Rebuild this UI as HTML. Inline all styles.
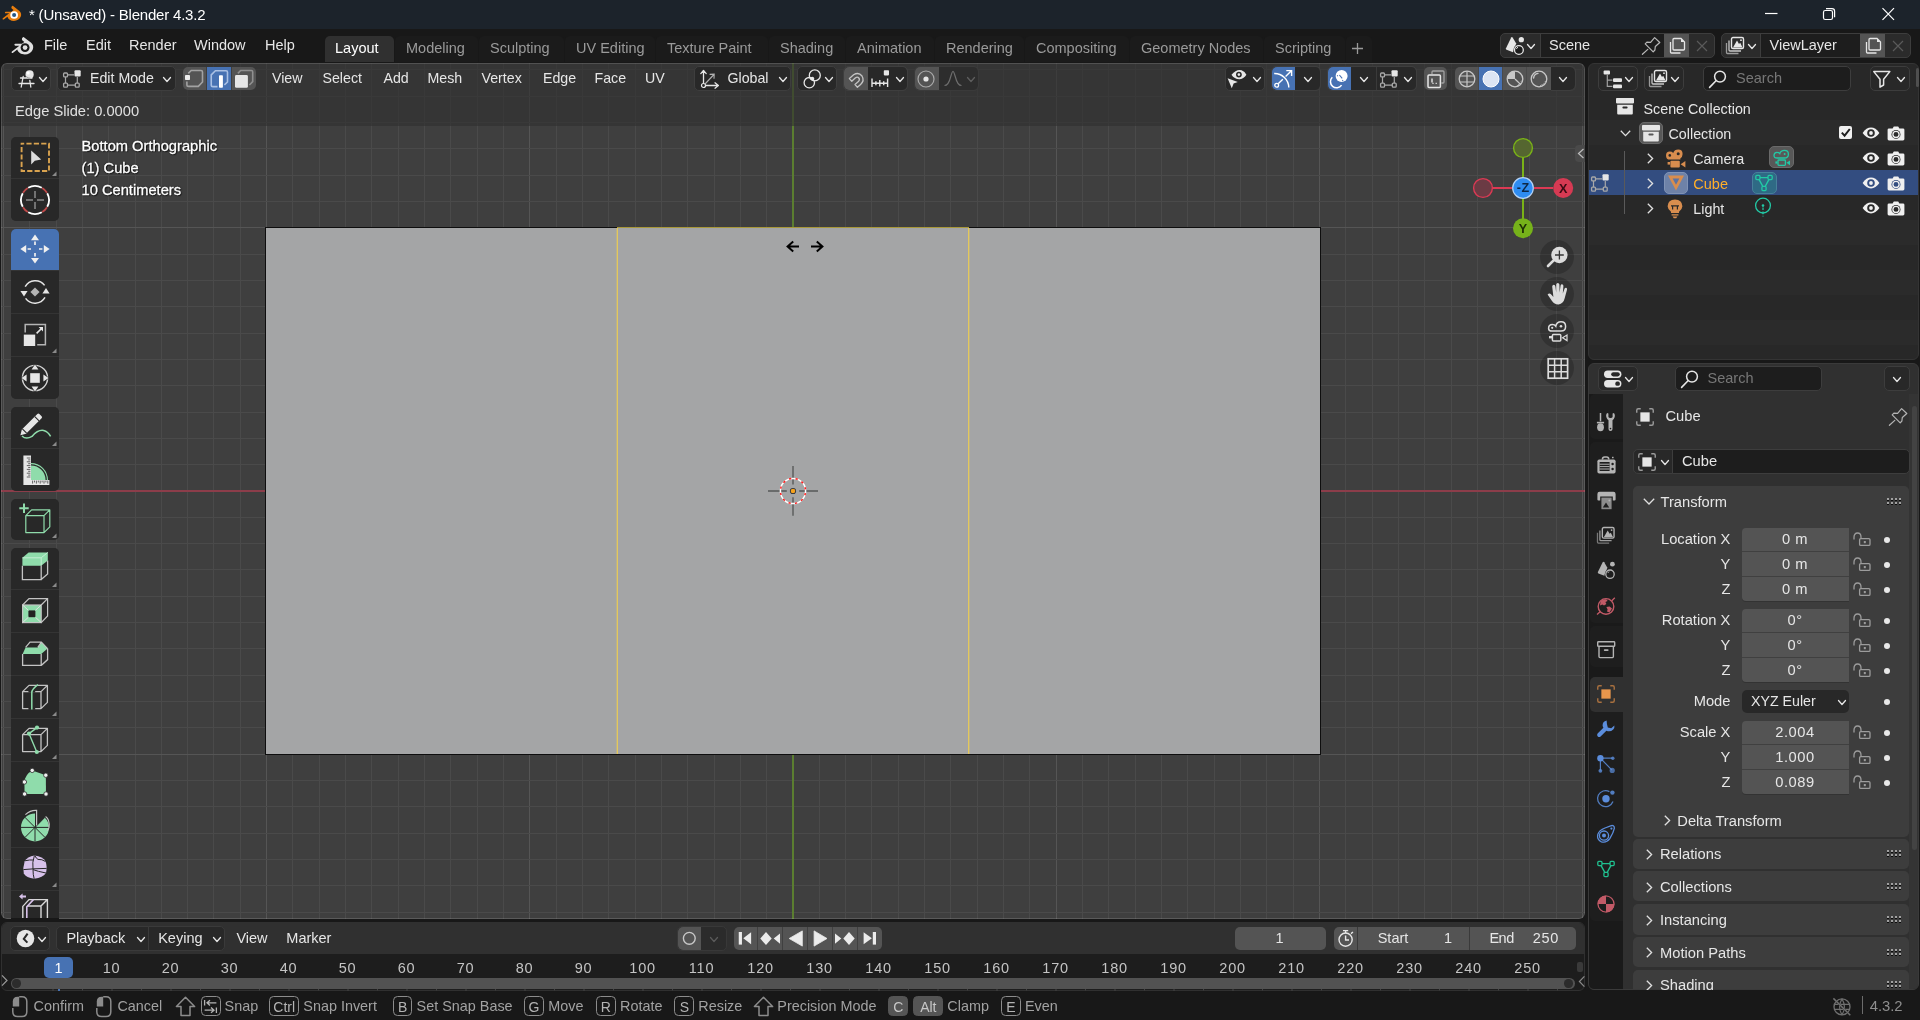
<!DOCTYPE html>
<html><head><meta charset="utf-8"><title>Blender</title>
<style>
html,body{margin:0;padding:0;background:#181818;overflow:hidden;}
body{width:1920px;height:1020px;position:relative;font-family:"Liberation Sans",sans-serif;}
.b{position:absolute;box-sizing:border-box;}
.t{position:absolute;white-space:nowrap;font-family:"Liberation Sans",sans-serif;}
svg{overflow:visible}
</style></head><body><div id="root" style="position:absolute;left:0;top:0;width:1920px;height:1020px;will-change:transform;">
<div class="b" style="left:0px;top:0px;width:1920px;height:29px;background:#1c232b;"></div>
<div class="b" style="left:0px;top:29px;width:1920px;height:991px;background:#181818;"></div>
<div class="b" style="left:1px;top:63px;width:1584px;height:856px;background:#3f3f3f;border-radius:6px;overflow:hidden;" id="vp">
<svg class="b" style="left:0;top:0" width="1584" height="856" shape-rendering="crispEdges"><rect x="2" y="0" width="1" height="856" fill="#555555"/><rect x="28" y="0" width="1" height="856" fill="#4a4a4a"/><rect x="55" y="0" width="1" height="856" fill="#4a4a4a"/><rect x="81" y="0" width="1" height="856" fill="#4a4a4a"/><rect x="107" y="0" width="1" height="856" fill="#4a4a4a"/><rect x="134" y="0" width="1" height="856" fill="#4a4a4a"/><rect x="160" y="0" width="1" height="856" fill="#4a4a4a"/><rect x="186" y="0" width="1" height="856" fill="#4a4a4a"/><rect x="212" y="0" width="1" height="856" fill="#4a4a4a"/><rect x="239" y="0" width="1" height="856" fill="#4a4a4a"/><rect x="265" y="0" width="1" height="856" fill="#555555"/><rect x="291" y="0" width="1" height="856" fill="#4a4a4a"/><rect x="318" y="0" width="1" height="856" fill="#4a4a4a"/><rect x="344" y="0" width="1" height="856" fill="#4a4a4a"/><rect x="370" y="0" width="1" height="856" fill="#4a4a4a"/><rect x="397" y="0" width="1" height="856" fill="#4a4a4a"/><rect x="423" y="0" width="1" height="856" fill="#4a4a4a"/><rect x="449" y="0" width="1" height="856" fill="#4a4a4a"/><rect x="476" y="0" width="1" height="856" fill="#4a4a4a"/><rect x="502" y="0" width="1" height="856" fill="#4a4a4a"/><rect x="528" y="0" width="1" height="856" fill="#555555"/><rect x="555" y="0" width="1" height="856" fill="#4a4a4a"/><rect x="581" y="0" width="1" height="856" fill="#4a4a4a"/><rect x="607" y="0" width="1" height="856" fill="#4a4a4a"/><rect x="634" y="0" width="1" height="856" fill="#4a4a4a"/><rect x="660" y="0" width="1" height="856" fill="#4a4a4a"/><rect x="686" y="0" width="1" height="856" fill="#4a4a4a"/><rect x="713" y="0" width="1" height="856" fill="#4a4a4a"/><rect x="739" y="0" width="1" height="856" fill="#4a4a4a"/><rect x="765" y="0" width="1" height="856" fill="#4a4a4a"/><rect x="818" y="0" width="1" height="856" fill="#4a4a4a"/><rect x="844" y="0" width="1" height="856" fill="#4a4a4a"/><rect x="870" y="0" width="1" height="856" fill="#4a4a4a"/><rect x="897" y="0" width="1" height="856" fill="#4a4a4a"/><rect x="923" y="0" width="1" height="856" fill="#4a4a4a"/><rect x="949" y="0" width="1" height="856" fill="#4a4a4a"/><rect x="976" y="0" width="1" height="856" fill="#4a4a4a"/><rect x="1002" y="0" width="1" height="856" fill="#4a4a4a"/><rect x="1028" y="0" width="1" height="856" fill="#4a4a4a"/><rect x="1055" y="0" width="1" height="856" fill="#555555"/><rect x="1081" y="0" width="1" height="856" fill="#4a4a4a"/><rect x="1107" y="0" width="1" height="856" fill="#4a4a4a"/><rect x="1134" y="0" width="1" height="856" fill="#4a4a4a"/><rect x="1160" y="0" width="1" height="856" fill="#4a4a4a"/><rect x="1186" y="0" width="1" height="856" fill="#4a4a4a"/><rect x="1213" y="0" width="1" height="856" fill="#4a4a4a"/><rect x="1239" y="0" width="1" height="856" fill="#4a4a4a"/><rect x="1265" y="0" width="1" height="856" fill="#4a4a4a"/><rect x="1292" y="0" width="1" height="856" fill="#4a4a4a"/><rect x="1318" y="0" width="1" height="856" fill="#555555"/><rect x="1344" y="0" width="1" height="856" fill="#4a4a4a"/><rect x="1371" y="0" width="1" height="856" fill="#4a4a4a"/><rect x="1397" y="0" width="1" height="856" fill="#4a4a4a"/><rect x="1423" y="0" width="1" height="856" fill="#4a4a4a"/><rect x="1450" y="0" width="1" height="856" fill="#4a4a4a"/><rect x="1476" y="0" width="1" height="856" fill="#4a4a4a"/><rect x="1502" y="0" width="1" height="856" fill="#4a4a4a"/><rect x="1528" y="0" width="1" height="856" fill="#4a4a4a"/><rect x="1555" y="0" width="1" height="856" fill="#4a4a4a"/><rect x="1581" y="0" width="1" height="856" fill="#555555"/><rect x="0" y="6" width="1584" height="1" fill="#4a4a4a"/><rect x="0" y="33" width="1584" height="1" fill="#4a4a4a"/><rect x="0" y="59" width="1584" height="1" fill="#4a4a4a"/><rect x="0" y="85" width="1584" height="1" fill="#4a4a4a"/><rect x="0" y="112" width="1584" height="1" fill="#4a4a4a"/><rect x="0" y="138" width="1584" height="1" fill="#4a4a4a"/><rect x="0" y="164" width="1584" height="1" fill="#555555"/><rect x="0" y="191" width="1584" height="1" fill="#4a4a4a"/><rect x="0" y="217" width="1584" height="1" fill="#4a4a4a"/><rect x="0" y="243" width="1584" height="1" fill="#4a4a4a"/><rect x="0" y="270" width="1584" height="1" fill="#4a4a4a"/><rect x="0" y="296" width="1584" height="1" fill="#4a4a4a"/><rect x="0" y="322" width="1584" height="1" fill="#4a4a4a"/><rect x="0" y="349" width="1584" height="1" fill="#4a4a4a"/><rect x="0" y="375" width="1584" height="1" fill="#4a4a4a"/><rect x="0" y="401" width="1584" height="1" fill="#4a4a4a"/><rect x="0" y="454" width="1584" height="1" fill="#4a4a4a"/><rect x="0" y="480" width="1584" height="1" fill="#4a4a4a"/><rect x="0" y="506" width="1584" height="1" fill="#4a4a4a"/><rect x="0" y="533" width="1584" height="1" fill="#4a4a4a"/><rect x="0" y="559" width="1584" height="1" fill="#4a4a4a"/><rect x="0" y="585" width="1584" height="1" fill="#4a4a4a"/><rect x="0" y="612" width="1584" height="1" fill="#4a4a4a"/><rect x="0" y="638" width="1584" height="1" fill="#4a4a4a"/><rect x="0" y="664" width="1584" height="1" fill="#4a4a4a"/><rect x="0" y="691" width="1584" height="1" fill="#555555"/><rect x="0" y="717" width="1584" height="1" fill="#4a4a4a"/><rect x="0" y="743" width="1584" height="1" fill="#4a4a4a"/><rect x="0" y="770" width="1584" height="1" fill="#4a4a4a"/><rect x="0" y="796" width="1584" height="1" fill="#4a4a4a"/><rect x="0" y="822" width="1584" height="1" fill="#4a4a4a"/><rect x="0" y="849" width="1584" height="1" fill="#4a4a4a"/><rect x="0" y="427" width="1584" height="2" fill="#8c3d4a"/><rect x="791" y="0" width="2" height="856" fill="#5b7e30"/><rect x="264" y="164" width="1056" height="528" fill="#0e0e0e"/><rect x="265" y="165" width="1054" height="526" fill="#a4a5a6"/><rect x="616" y="164" width="352" height="1" fill="#a8983a"/><rect x="615" y="165" width="1" height="526" fill="#e4c85c" opacity="0.35"/><rect x="616" y="165" width="1" height="526" fill="#e4c85c"/><rect x="967" y="165" width="1" height="526" fill="#e4c85c"/><rect x="968" y="165" width="1" height="526" fill="#e4c85c" opacity="0.35"/></svg>
<div class="b" style="left:0px;top:0px;width:1584px;height:63px;background:rgba(48,48,48,0.64);"></div>
<div class="b" style="left:0px;top:0px;width:1584px;height:856px;background:transparent;border:1px solid rgba(255,255,255,0.14);border-radius:6px;"></div>
</div>
<svg class="b" style="left:2px;top:5.4px;" width="19.68" height="16.4" viewBox="0 0 24 20"><path d="M13.6 1.2 L21.2 7.2 C23.4 9 24 11.6 22.8 14.4 C21.4 17.6 18.2 19.4 14.6 19.4 C10.6 19.4 7.4 17.2 6.6 14.2 L2.2 17.6 C1.2 18.4 0 17 1 16.2 L8.8 10.2 L4.6 10.2 C3.2 10.2 3.2 8.2 4.6 8.2 L11.6 8.2 L14 6.2 L11.8 4.4 C10.8 3.4 12.2 0.4 13.6 1.2 Z" fill="#e87d0d"/><circle cx="14.8" cy="12.2" r="4.7" fill="#ffffff"/><circle cx="14.8" cy="12.2" r="2.5" fill="#265787"/></svg>
<span class="t " style="left:29px;top:4.5px;height:20px;line-height:20px;font-size:15px;color:#ffffff;letter-spacing:-0.2px">* (Unsaved) - Blender 4.3.2</span>
<svg class="b" style="left:1760px;top:0px;" width="160" height="29" viewBox="0 0 160 29"><path d="M5 13.5 H17.5" stroke="#fff" stroke-width="1.2" fill="none"/><rect x="63.5" y="10.5" width="9" height="9" rx="1.8" fill="none" stroke="#fff" stroke-width="1.2"/><path d="M66 8.6 H72 Q74.6 8.6 74.6 11.2 V17.2" fill="none" stroke="#fff" stroke-width="1.2"/><path d="M122.5 8.2 L134 19.8 M134 8.2 L122.5 19.8" stroke="#fff" stroke-width="1.2" fill="none"/></svg>
<svg class="b" style="left:11px;top:36px;" width="22.799999999999997" height="19.0" viewBox="0 0 24 20"><path d="M13.6 1.2 L21.2 7.2 C23.4 9 24 11.6 22.8 14.4 C21.4 17.6 18.2 19.4 14.6 19.4 C10.6 19.4 7.4 17.2 6.6 14.2 L2.2 17.6 C1.2 18.4 0 17 1 16.2 L8.8 10.2 L4.6 10.2 C3.2 10.2 3.2 8.2 4.6 8.2 L11.6 8.2 L14 6.2 L11.8 4.4 C10.8 3.4 12.2 0.4 13.6 1.2 Z" fill="#e0e0e0"/><circle cx="14.8" cy="12.2" r="4.7" fill="#181818"/><circle cx="14.8" cy="12.2" r="2.5" fill="#e0e0e0"/></svg>
<span class="t " style="left:44px;top:34.5px;height:20px;line-height:20px;font-size:14.5px;color:#e6e6e6;">File</span>
<span class="t " style="left:86px;top:34.5px;height:20px;line-height:20px;font-size:14.5px;color:#e6e6e6;">Edit</span>
<span class="t " style="left:129px;top:34.5px;height:20px;line-height:20px;font-size:14.5px;color:#e6e6e6;">Render</span>
<span class="t " style="left:194px;top:34.5px;height:20px;line-height:20px;font-size:14.5px;color:#e6e6e6;">Window</span>
<span class="t " style="left:265px;top:34.5px;height:20px;line-height:20px;font-size:14.5px;color:#e6e6e6;">Help</span>
<div class="b" style="left:325px;top:36px;width:69px;height:26px;background:#303030;border-radius:5px 5px 0 0;"></div>
<div class="b" style="left:395px;top:36px;width:83px;height:26px;background:#1b1b1b;border-radius:5px 5px 0 0;"></div>
<div class="b" style="left:479px;top:36px;width:85px;height:26px;background:#1b1b1b;border-radius:5px 5px 0 0;"></div>
<div class="b" style="left:565px;top:36px;width:90px;height:26px;background:#1b1b1b;border-radius:5px 5px 0 0;"></div>
<div class="b" style="left:656px;top:36px;width:112px;height:26px;background:#1b1b1b;border-radius:5px 5px 0 0;"></div>
<div class="b" style="left:769px;top:36px;width:76px;height:26px;background:#1b1b1b;border-radius:5px 5px 0 0;"></div>
<div class="b" style="left:846px;top:36px;width:88px;height:26px;background:#1b1b1b;border-radius:5px 5px 0 0;"></div>
<div class="b" style="left:935px;top:36px;width:89px;height:26px;background:#1b1b1b;border-radius:5px 5px 0 0;"></div>
<div class="b" style="left:1025px;top:36px;width:104px;height:26px;background:#1b1b1b;border-radius:5px 5px 0 0;"></div>
<div class="b" style="left:1130px;top:36px;width:133px;height:26px;background:#1b1b1b;border-radius:5px 5px 0 0;"></div>
<div class="b" style="left:1264px;top:36px;width:81px;height:26px;background:#1b1b1b;border-radius:5px 5px 0 0;"></div>
<div class="b" style="left:1346px;top:36px;width:26px;height:26px;background:#1b1b1b;border-radius:5px 5px 0 0;"></div>
<span class="t " style="left:335px;top:38.0px;height:20px;line-height:20px;font-size:14.5px;color:#ffffff;">Layout</span>
<span class="t " style="left:406px;top:38.0px;height:20px;line-height:20px;font-size:14.5px;color:#9a9a9a;">Modeling</span>
<span class="t " style="left:490px;top:38.0px;height:20px;line-height:20px;font-size:14.5px;color:#9a9a9a;">Sculpting</span>
<span class="t " style="left:576px;top:38.0px;height:20px;line-height:20px;font-size:14.5px;color:#9a9a9a;">UV Editing</span>
<span class="t " style="left:667px;top:38.0px;height:20px;line-height:20px;font-size:14.5px;color:#9a9a9a;">Texture Paint</span>
<span class="t " style="left:780px;top:38.0px;height:20px;line-height:20px;font-size:14.5px;color:#9a9a9a;">Shading</span>
<span class="t " style="left:857px;top:38.0px;height:20px;line-height:20px;font-size:14.5px;color:#9a9a9a;">Animation</span>
<span class="t " style="left:946px;top:38.0px;height:20px;line-height:20px;font-size:14.5px;color:#9a9a9a;">Rendering</span>
<span class="t " style="left:1036px;top:38.0px;height:20px;line-height:20px;font-size:14.5px;color:#9a9a9a;">Compositing</span>
<span class="t " style="left:1141px;top:38.0px;height:20px;line-height:20px;font-size:14.5px;color:#9a9a9a;">Geometry Nodes</span>
<span class="t " style="left:1275px;top:38.0px;height:20px;line-height:20px;font-size:14.5px;color:#9a9a9a;">Scripting</span>
<svg class="b" style="left:1351px;top:42px;" width="13" height="13" viewBox="0 0 13 13"><path d="M6.5 1 V12 M1 6.5 H12" stroke="#9a9a9a" stroke-width="1.3" fill="none"/></svg>
<div class="b" style="left:1500px;top:33px;width:214.5px;height:25px;background:#2b2b2b;border-radius:5px;border:1px solid #3d3d3d;"></div>
<div class="b" style="left:1539.5px;top:33px;width:124.5px;height:25px;background:#1d1d1d;border:1px solid #3d3d3d;border-right:none"></div>
<div class="b" style="left:1664px;top:34px;width:25px;height:23px;background:#545454;"></div>
<span class="t " style="left:1549.0px;top:34.8px;height:20px;line-height:20px;font-size:14.5px;color:#e6e6e6;">Scene</span>
<svg class="b" style="left:1504.6px;top:36px;" width="22" height="22" viewBox="0 0 22 22"><path d="M6.2 1.4 Q6.9 0.6 7.6 1.6 L11.2 7.6 L8 16.2 L1.6 13.8 Q0.6 13.2 1 12.2 Z" fill="#e6e6e6"/><circle cx="16.3" cy="3.7" r="2.65" fill="#e6e6e6"/><circle cx="13.9" cy="14" r="5.4" fill="#282828"/><circle cx="13.9" cy="14" r="4.4" fill="#1d1d1d" stroke="#e6e6e6" stroke-width="1.3"/><path d="M11.4 12.8 Q11.8 11.6 13 11.4" stroke="#e6e6e6" stroke-width="1" fill="none"/></svg>
<svg class="b" style="left:1527.3px;top:44.2px;" width="8" height="5.5" viewBox="0 0 8 5.5"><path d="M0.5 0.5 L4.0 4.5 L7.5 0.5" fill="none" stroke="#e6e6e6" stroke-width="1.3" stroke-linecap="round" stroke-linejoin="round"/></svg>
<svg class="b" style="left:1667.5px;top:36.5px;" width="18" height="18" viewBox="0 0 18 18"><path d="M6 1.5 H13 L16.5 5 V12 Q16.5 13 15.5 13 H6 Q5 13 5 12 V2.5 Q5 1.5 6 1.5 Z" fill="none" stroke="#e6e6e6" stroke-width="1.3"/><path d="M13 1.5 V5 H16.5 Z" fill="#e6e6e6"/><path d="M2.5 5 V15 Q2.5 16 3.5 16 H12.5" fill="none" stroke="#e6e6e6" stroke-width="1.3"/></svg>
<svg class="b" style="left:1696px;top:40px;" width="12" height="12" viewBox="0 0 12 12"><path d="M1 1 L11 11 M11 1 L1 11" stroke="#5a5a5a" stroke-width="1.2" fill="none"/></svg>
<svg class="b" style="left:1641.4px;top:34.9px;" width="20" height="20" viewBox="0 0 20 20"><path d="M13.6 2.6 L18.8 7.5 L14.3 11.5 L13.9 15.0 L12.2 16.9 L4.2 8.9 L5.9 7.2 L9.6 7.3 Z M6.8 14.4 L1.4 19.3" fill="none" stroke="#b8b8b8" stroke-width="1.2" stroke-linejoin="round" stroke-linecap="round"/></svg>
<div class="b" style="left:1721px;top:33px;width:190px;height:25px;background:#2b2b2b;border-radius:5px;border:1px solid #3d3d3d;"></div>
<div class="b" style="left:1760px;top:33px;width:100px;height:25px;background:#1d1d1d;border:1px solid #3d3d3d;border-right:none"></div>
<div class="b" style="left:1860px;top:34px;width:25px;height:23px;background:#545454;"></div>
<span class="t " style="left:1769.5px;top:34.8px;height:20px;line-height:20px;font-size:14.5px;color:#e6e6e6;">ViewLayer</span>
<svg class="b" style="left:1725px;top:36px;" width="20" height="20" viewBox="0 0 20 20"><rect x="6.5" y="1.5" width="12" height="11" rx="1.5" fill="none" stroke="#e6e6e6" stroke-width="1.4"/><path d="M8 11.5 L12 4.5 L14 8 L15.2 6.8 L17.5 11.5 Z" fill="#e6e6e6"/><circle cx="16" cy="4.2" r="0.9" fill="#e6e6e6"/><path d="M4 4.5 V14 Q4 15 5 15 H16" fill="none" stroke="#e6e6e6" stroke-width="1.3" opacity="0.85"/><path d="M1.5 7 V16.5 Q1.5 17.5 2.5 17.5 H13.5" fill="none" stroke="#e6e6e6" stroke-width="1.3" opacity="0.6"/></svg>
<svg class="b" style="left:1747.8px;top:44.2px;" width="8" height="5.5" viewBox="0 0 8 5.5"><path d="M0.5 0.5 L4.0 4.5 L7.5 0.5" fill="none" stroke="#e6e6e6" stroke-width="1.3" stroke-linecap="round" stroke-linejoin="round"/></svg>
<svg class="b" style="left:1863.5px;top:36.5px;" width="18" height="18" viewBox="0 0 18 18"><path d="M6 1.5 H13 L16.5 5 V12 Q16.5 13 15.5 13 H6 Q5 13 5 12 V2.5 Q5 1.5 6 1.5 Z" fill="none" stroke="#e6e6e6" stroke-width="1.3"/><path d="M13 1.5 V5 H16.5 Z" fill="#e6e6e6"/><path d="M2.5 5 V15 Q2.5 16 3.5 16 H12.5" fill="none" stroke="#e6e6e6" stroke-width="1.3"/></svg>
<svg class="b" style="left:1892px;top:40px;" width="12" height="12" viewBox="0 0 12 12"><path d="M1 1 L11 11 M11 1 L1 11" stroke="#5a5a5a" stroke-width="1.2" fill="none"/></svg>
<div class="b" style="left:11px;top:66px;width:40px;height:25px;background:#282828;border:1px solid #3e3e3e;border-radius:5px;"></div>
<svg class="b" style="left:17px;top:69px;" width="20" height="20" viewBox="0 0 20 20"><path d="M3.5 9 H15 M2 14.5 H17 M6.2 7.5 L4.2 18 M12.8 11.5 L13.8 18" stroke="#e6e6e6" stroke-width="1.3" fill="none" stroke-linecap="round"/><circle cx="12.6" cy="5.4" r="4.1" fill="#e6e6e6"/><circle cx="11.2" cy="4" r="1.5" fill="#fff"/><path d="M9.4 7.2 Q10.4 9.6 13.4 9.2" stroke="#282828" stroke-width="0.8" fill="none" opacity="0.5"/></svg>
<svg class="b" style="left:38.5px;top:77px;" width="8" height="5.5" viewBox="0 0 8 5.5"><path d="M0.5 0.5 L4.0 4.5 L7.5 0.5" fill="none" stroke="#e6e6e6" stroke-width="1.3" stroke-linecap="round" stroke-linejoin="round"/></svg>
<div class="b" style="left:57px;top:66px;width:119px;height:25px;background:#282828;border:1px solid #3e3e3e;border-radius:5px;"></div>
<svg class="b" style="left:62px;top:69px;" width="20" height="20" viewBox="0 0 20 20"><path d="M5.6 5.9 H12 M3.5 8 V14 M5.6 16.1 H13.2 M15.3 8 V14" stroke="#a8a8a8" stroke-width="1.2" fill="none"/><rect x="1.6" y="4" width="3.9" height="3.9" rx="0.9" fill="#282828" stroke="#a8a8a8" stroke-width="1.3"/><rect x="1.6" y="14.2" width="3.9" height="3.9" rx="0.9" fill="#282828" stroke="#a8a8a8" stroke-width="1.3"/><rect x="13.3" y="14.2" width="3.9" height="3.9" rx="0.9" fill="#282828" stroke="#a8a8a8" stroke-width="1.3"/><rect x="12.5" y="1.3" width="6.2" height="6.2" rx="1" fill="#e6e6e6"/></svg>
<span class="t " style="left:90px;top:68.0px;height:20px;line-height:20px;font-size:14.2px;color:#e6e6e6;">Edit Mode</span>
<svg class="b" style="left:162.5px;top:77px;" width="8" height="5.5" viewBox="0 0 8 5.5"><path d="M0.5 0.5 L4.0 4.5 L7.5 0.5" fill="none" stroke="#e6e6e6" stroke-width="1.3" stroke-linecap="round" stroke-linejoin="round"/></svg>
<div class="b" style="left:183px;top:67px;width:73px;height:23px;background:#545454;border-radius:5px;"></div>
<div class="b" style="left:207px;top:67px;width:24px;height:23px;background:#4772b3;border-radius:0;"></div>
<div class="b" style="left:206px;top:67px;width:1px;height:23px;background:#3f3f3f;"></div>
<div class="b" style="left:231px;top:67px;width:1px;height:23px;background:#3f3f3f;"></div>
<svg class="b" style="left:185px;top:69px;" width="22" height="22" viewBox="0 0 22 22"><path d="M3.3 4.4 L6.2 1.5 H16 Q17.5 1.5 17.5 3 V13 L13.3 17.4 H3.6 Q1.9 17.4 1.9 15.7 V12.6" fill="none" stroke="#a2a2a2" stroke-width="1.6"/><rect x="0" y="6.1" width="5" height="5" rx="0.8" fill="#ececec"/></svg>
<svg class="b" style="left:209px;top:69px;" width="22" height="22" viewBox="0 0 22 22"><path d="M8.5 17.6 H4 Q2.25 17.6 2.25 15.9 V5.9 L6.4 1.75 H17 Q18.5 1.75 18.5 3.2 V13 L15.4 15.9" fill="none" stroke="#a9c0e4" stroke-width="1.6"/><rect x="10" y="6.3" width="3.9" height="12.5" rx="0.8" fill="#ffffff"/></svg>
<svg class="b" style="left:233px;top:69px;" width="22" height="22" viewBox="0 0 22 22"><path d="M4.9 4.4 L7.6 1.5 H18.4 Q19.7 1.5 19.7 2.8 V12.6 L16.4 16" fill="none" stroke="#8f8f8f" stroke-width="1.6"/><rect x="2" y="6.1" width="12.9" height="12.7" rx="1.4" fill="#e6e6e6"/></svg>
<span class="t " style="left:272px;top:68.0px;height:20px;line-height:20px;font-size:14.2px;color:#e6e6e6;">View</span>
<span class="t " style="left:322.5px;top:68.0px;height:20px;line-height:20px;font-size:14.2px;color:#e6e6e6;">Select</span>
<span class="t " style="left:383.5px;top:68.0px;height:20px;line-height:20px;font-size:14.2px;color:#e6e6e6;">Add</span>
<span class="t " style="left:427.5px;top:68.0px;height:20px;line-height:20px;font-size:14.2px;color:#e6e6e6;">Mesh</span>
<span class="t " style="left:481.5px;top:68.0px;height:20px;line-height:20px;font-size:14.2px;color:#e6e6e6;">Vertex</span>
<span class="t " style="left:543px;top:68.0px;height:20px;line-height:20px;font-size:14.2px;color:#e6e6e6;">Edge</span>
<span class="t " style="left:594.5px;top:68.0px;height:20px;line-height:20px;font-size:14.2px;color:#e6e6e6;">Face</span>
<span class="t " style="left:645px;top:68.0px;height:20px;line-height:20px;font-size:14.2px;color:#e6e6e6;">UV</span>
<div class="b" style="left:694px;top:66px;width:97px;height:25px;background:#282828;border:1px solid #3e3e3e;border-radius:5px;"></div>
<svg class="b" style="left:699px;top:68px;" width="22" height="22" viewBox="0 0 22 22"><path d="M4.5 17.5 V3 M1.8 5.6 L4.5 2.4 L7.2 5.6 M4.5 17.5 H19 M16 14.8 L19.4 17.5 L16 20.2" fill="none" stroke="#e6e6e6" stroke-width="1.3" stroke-linejoin="round" stroke-linecap="round"/><path d="M6 16 L14.5 7 M10.6 6.4 L15.2 6.2 L15 10.8" fill="none" stroke="#b0b0b0" stroke-width="1.1"/><circle cx="4.5" cy="17.5" r="2" fill="#282828" stroke="#e6e6e6" stroke-width="1.2"/></svg>
<span class="t " style="left:727.5px;top:68.0px;height:20px;line-height:20px;font-size:14.2px;color:#e6e6e6;">Global</span>
<svg class="b" style="left:778.5px;top:77px;" width="8" height="5.5" viewBox="0 0 8 5.5"><path d="M0.5 0.5 L4.0 4.5 L7.5 0.5" fill="none" stroke="#e6e6e6" stroke-width="1.3" stroke-linecap="round" stroke-linejoin="round"/></svg>
<div class="b" style="left:797px;top:66px;width:40px;height:25px;background:#282828;border:1px solid #3e3e3e;border-radius:5px;"></div>
<svg class="b" style="left:803px;top:69px;" width="20" height="20" viewBox="0 0 20 20"><circle cx="11.8" cy="6.4" r="5.5" fill="none" stroke="#e6e6e6" stroke-width="1.3"/><circle cx="6.3" cy="13.7" r="5.2" fill="none" stroke="#e6e6e6" stroke-width="1.3"/><circle cx="9.3" cy="9.6" r="1.9" fill="#e6e6e6"/></svg>
<svg class="b" style="left:825px;top:77px;" width="8" height="5.5" viewBox="0 0 8 5.5"><path d="M0.5 0.5 L4.0 4.5 L7.5 0.5" fill="none" stroke="#e6e6e6" stroke-width="1.3" stroke-linecap="round" stroke-linejoin="round"/></svg>
<div class="b" style="left:844px;top:67px;width:63px;height:23px;background:#282828;border-radius:5px;"></div>
<div class="b" style="left:843px;top:66px;width:65px;height:25px;background:transparent;border:1px solid #3e3e3e;border-radius:5px;"></div>
<div class="b" style="left:844px;top:67px;width:24px;height:23px;background:#545454;border-radius:5px 0 0 5px;"></div>
<svg class="b" style="left:846px;top:69.6px;" width="22" height="22" viewBox="0 0 22 22"><path d="M3.4 8.6 L7.6 4.8 Q12.6 1.6 16 6 Q18.8 10.6 14.6 14.4 L11.4 17.2 L9 14.6 L12.4 11.6 Q14.2 9.6 12.8 8 Q11.4 6.4 9.2 8 L5.8 11.2 Z" fill="none" stroke="#c4c4c4" stroke-width="1.3" stroke-linejoin="round"/></svg>
<svg class="b" style="left:870px;top:67px;" width="24" height="24" viewBox="0 0 24 24"><path d="M2 11.4 V20 M17.6 11.4 V20 M2 16.2 H17.6 M5.9 14.2 V18.2 M9.8 13 V19.4 M13.7 14.2 V18.2" stroke="#e6e6e6" stroke-width="1.4" fill="none"/><rect x="13.8" y="3.2" width="5.2" height="5.2" rx="0.8" fill="#e6e6e6"/></svg>
<svg class="b" style="left:896px;top:77px;" width="8" height="5.5" viewBox="0 0 8 5.5"><path d="M0.5 0.5 L4.0 4.5 L7.5 0.5" fill="none" stroke="#e6e6e6" stroke-width="1.3" stroke-linecap="round" stroke-linejoin="round"/></svg>
<div class="b" style="left:915px;top:67px;width:63px;height:23px;background:#2d2d2d;border-radius:5px;"></div>
<div class="b" style="left:914px;top:66px;width:65px;height:25px;background:transparent;border:1px solid #3a3a3a;border-radius:5px;"></div>
<div class="b" style="left:915px;top:67px;width:24px;height:23px;background:#545454;border-radius:5px 0 0 5px;"></div>
<svg class="b" style="left:915px;top:68px;" width="22" height="22" viewBox="0 0 22 22"><circle cx="11" cy="11" r="8" fill="none" stroke="#a9a9a9" stroke-width="1.2"/><circle cx="11" cy="11" r="2.6" fill="#e6e6e6"/></svg>
<svg class="b" style="left:942px;top:68px;" width="22" height="22" viewBox="0 0 22 22"><path d="M2.5 17.5 Q6.5 17.5 8.6 9 Q10.2 3.4 11 3.4 Q11.8 3.4 13.4 9 Q15.5 17.5 19.5 17.5" fill="none" stroke="#6e6e6e" stroke-width="1.2"/></svg>
<svg class="b" style="left:966.5px;top:77px;" width="8" height="5.5" viewBox="0 0 8 5.5"><path d="M0.5 0.5 L4.0 4.5 L7.5 0.5" fill="none" stroke="#5e5e5e" stroke-width="1.3" stroke-linecap="round" stroke-linejoin="round"/></svg>
<div class="b" style="left:1225px;top:66px;width:40px;height:25px;background:#282828;border:1px solid #3e3e3e;border-radius:5px;"></div>
<svg class="b" style="left:1226.4px;top:68px;" width="24" height="22" viewBox="0 0 24 22"><path d="M5.5 6.8 Q10.4 0.8 15.6 2.2 Q19 3.4 20.4 6.8 Q18 10.6 13.8 11.2 Q8.4 11.4 5.5 6.8 Z" fill="#e6e6e6"/><circle cx="12.9" cy="6.6" r="2.9" fill="#282828"/><circle cx="12.9" cy="6.6" r="1.3" fill="#e6e6e6"/><path d="M1.6 10.3 L11.8 14 L7.6 15.6 L5.8 20.2 Z" fill="#e6e6e6" stroke="#282828" stroke-width="0.8" paint-order="stroke"/></svg>
<svg class="b" style="left:1252.5px;top:77px;" width="8" height="5.5" viewBox="0 0 8 5.5"><path d="M0.5 0.5 L4.0 4.5 L7.5 0.5" fill="none" stroke="#e6e6e6" stroke-width="1.3" stroke-linecap="round" stroke-linejoin="round"/></svg>
<div class="b" style="left:1272px;top:67px;width:48px;height:23px;background:#282828;border-radius:5px;"></div>
<div class="b" style="left:1271px;top:66px;width:50px;height:25px;background:transparent;border:1px solid #3e3e3e;border-radius:5px;"></div>
<div class="b" style="left:1272px;top:67px;width:23px;height:23px;background:#4772b3;border-radius:5px 0 0 5px;"></div>
<svg class="b" style="left:1273px;top:68px;" width="22" height="22" viewBox="0 0 22 22"><path d="M1.2 5.5 A14.3 14.3 0 0 1 15.8 19.6" fill="none" stroke="#fff" stroke-width="1.4"/><path d="M5.2 15.7 L9.8 11.2 M12.6 8.5 L18.4 2.8 M13.3 2.6 H18.6 V7.9" fill="none" stroke="#fff" stroke-width="1.4"/><circle cx="3.7" cy="17.2" r="1.9" fill="#4772b3" stroke="#fff" stroke-width="1.3"/></svg>
<svg class="b" style="left:1303.5px;top:77px;" width="8" height="5.5" viewBox="0 0 8 5.5"><path d="M0.5 0.5 L4.0 4.5 L7.5 0.5" fill="none" stroke="#e6e6e6" stroke-width="1.3" stroke-linecap="round" stroke-linejoin="round"/></svg>
<div class="b" style="left:1328px;top:67px;width:88px;height:23px;background:#282828;border-radius:5px;"></div>
<div class="b" style="left:1327px;top:66px;width:90px;height:25px;background:transparent;border:1px solid #3e3e3e;border-radius:5px;"></div>
<div class="b" style="left:1328px;top:67px;width:23px;height:23px;background:#4772b3;border-radius:5px 0 0 5px;"></div>
<div class="b" style="left:1376px;top:67px;width:1px;height:23px;background:#3a3a3a;"></div>
<svg class="b" style="left:1329px;top:68px;" width="22" height="22" viewBox="0 0 22 22"><path d="M3.3 9.3 A6.1 6.1 0 1 0 12.6 17.1" fill="none" stroke="#fff" stroke-width="1.5"/><circle cx="12.6" cy="7.9" r="6.8" fill="#4772b3"/><circle cx="12.6" cy="7.9" r="6" fill="#fff"/><path d="M10.4 7 L13.2 10.4 M8 7.6 L9 8 M13.4 12 L14 13" stroke="#4772b3" stroke-width="1.1"/></svg>
<svg class="b" style="left:1359.5px;top:77px;" width="8" height="5.5" viewBox="0 0 8 5.5"><path d="M0.5 0.5 L4.0 4.5 L7.5 0.5" fill="none" stroke="#e6e6e6" stroke-width="1.3" stroke-linecap="round" stroke-linejoin="round"/></svg>
<svg class="b" style="left:1379px;top:69px;" width="20" height="20" viewBox="0 0 20 20"><path d="M5.6 5.9 H12 M3.5 8 V14 M5.6 16.1 H13.2 M15.3 8 V14" stroke="#a8a8a8" stroke-width="1.2" fill="none"/><rect x="1.6" y="4" width="3.9" height="3.9" rx="0.9" fill="#282828" stroke="#a8a8a8" stroke-width="1.3"/><rect x="1.6" y="14.2" width="3.9" height="3.9" rx="0.9" fill="#282828" stroke="#a8a8a8" stroke-width="1.3"/><rect x="13.3" y="14.2" width="3.9" height="3.9" rx="0.9" fill="#282828" stroke="#a8a8a8" stroke-width="1.3"/><rect x="12.5" y="1.3" width="6.2" height="6.2" rx="1" fill="#e6e6e6"/></svg>
<svg class="b" style="left:1404px;top:77px;" width="8" height="5.5" viewBox="0 0 8 5.5"><path d="M0.5 0.5 L4.0 4.5 L7.5 0.5" fill="none" stroke="#e6e6e6" stroke-width="1.3" stroke-linecap="round" stroke-linejoin="round"/></svg>
<div class="b" style="left:1424px;top:67px;width:23px;height:23px;background:#545454;border-radius:5px;"></div>
<svg class="b" style="left:1425px;top:68px;" width="22" height="22" viewBox="0 0 22 22"><path d="M7 6 V4 Q7 3 8 3 H18 Q19 3 19 4 V14 Q19 15 18 15 H16.4" fill="none" stroke="#a2a2a2" stroke-width="1.3"/><rect x="3" y="7" width="12.4" height="12.4" rx="1" fill="none" stroke="#e6e6e6" stroke-width="1.5"/><path d="M7 10.4 V14.6 M7.4 15.4 H8.6 M10.6 15.4 H11.8" stroke="#e6e6e6" stroke-width="1.4"/></svg>
<div class="b" style="left:1455px;top:67px;width:120px;height:23px;background:#545454;border-radius:5px;"></div>
<div class="b" style="left:1551px;top:67px;width:24px;height:23px;background:#282828;border-radius:0 5px 5px 0;"></div>
<div class="b" style="left:1551px;top:66px;width:25px;height:25px;background:transparent;border:1px solid #3e3e3e;border-left:none;border-radius:0 5px 5px 0;"></div>
<div class="b" style="left:1479px;top:67px;width:23px;height:23px;background:#4772b3;border-radius:0;"></div>
<div class="b" style="left:1478px;top:67px;width:1px;height:23px;background:#4a4a4a;"></div>
<div class="b" style="left:1502px;top:67px;width:1px;height:23px;background:#4a4a4a;"></div>
<div class="b" style="left:1526px;top:67px;width:1px;height:23px;background:#4a4a4a;"></div>
<svg class="b" style="left:1456px;top:68px;" width="22" height="22" viewBox="0 0 22 22"><circle cx="11" cy="11" r="7.8" fill="none" stroke="#c8c8c8" stroke-width="1.3"/><path d="M11 3.2 V18.8 M3.6 8 H18.4 M3.6 14 H18.4" stroke="#c8c8c8" stroke-width="1.2" fill="none"/></svg>
<svg class="b" style="left:1480px;top:68px;" width="22" height="22" viewBox="0 0 22 22"><circle cx="11" cy="11" r="8" fill="#dde5f3" stroke="#fff" stroke-width="1"/></svg>
<svg class="b" style="left:1504px;top:68px;" width="22" height="22" viewBox="0 0 22 22"><circle cx="11" cy="11" r="7.8" fill="none" stroke="#c8c8c8" stroke-width="1.3"/><path d="M11 3.2 A7.8 7.8 0 0 0 3.2 11 H11 Z" fill="#c8c8c8"/><path d="M11 11 L16.6 16.4" stroke="#c8c8c8" stroke-width="1.3"/><path d="M13.4 17.6 L14.6 16.4 M15.6 16 L16.8 14.8 M17 13.6 L18 12.6" stroke="#c8c8c8" stroke-width="1"/></svg>
<svg class="b" style="left:1528px;top:68px;" width="22" height="22" viewBox="0 0 22 22"><circle cx="11" cy="11" r="7.8" fill="none" stroke="#c8c8c8" stroke-width="1.3"/><path d="M5.6 10 Q6 6 10 5.4" fill="none" stroke="#c8c8c8" stroke-width="1.4" stroke-linecap="round"/><path d="M12.4 17.8 L13.6 16.6 M14.8 16.6 L16 15.4 M16.6 14.2 L17.6 13.2" stroke="#c8c8c8" stroke-width="1"/></svg>
<svg class="b" style="left:1559px;top:77px;" width="8" height="5.5" viewBox="0 0 8 5.5"><path d="M0.5 0.5 L4.0 4.5 L7.5 0.5" fill="none" stroke="#e6e6e6" stroke-width="1.3" stroke-linecap="round" stroke-linejoin="round"/></svg>
<span class="t " style="left:15px;top:100.5px;height:20px;line-height:20px;font-size:14.7px;color:#e0e0e0;">Edge Slide: 0.0000</span>
<div class="b" style="left:11px;top:137px;width:48px;height:84px;background:#343434;border-radius:5px;overflow:hidden;">
<div class="b" style="left:0px;top:0px;width:48px;height:41px;background:#282828;"></div>
<div class="b" style="left:0px;top:42px;width:48px;height:42px;background:#282828;"></div>
</div>
<div class="b" style="left:11px;top:229px;width:48px;height:170px;background:#343434;border-radius:5px;overflow:hidden;">
<div class="b" style="left:0px;top:0px;width:48px;height:41px;background:#4772b3;"></div>
<div class="b" style="left:0px;top:42px;width:48px;height:42px;background:#282828;"></div>
<div class="b" style="left:0px;top:85px;width:48px;height:42px;background:#282828;"></div>
<div class="b" style="left:0px;top:128px;width:48px;height:42px;background:#282828;"></div>
</div>
<div class="b" style="left:11px;top:407px;width:48px;height:84px;background:#343434;border-radius:5px;overflow:hidden;">
<div class="b" style="left:0px;top:0px;width:48px;height:41px;background:#282828;"></div>
<div class="b" style="left:0px;top:42px;width:48px;height:42px;background:#282828;"></div>
</div>
<div class="b" style="left:11px;top:499px;width:48px;height:41px;background:#343434;border-radius:5px;overflow:hidden;">
<div class="b" style="left:0px;top:0px;width:48px;height:41px;background:#282828;"></div>
</div>
<div class="b" style="left:11px;top:548px;width:48px;height:370px;background:#343434;border-radius:5px 5px 0 0;overflow:hidden;">
<div class="b" style="left:0px;top:0px;width:48px;height:41px;background:#282828;"></div>
<div class="b" style="left:0px;top:42px;width:48px;height:42px;background:#282828;"></div>
<div class="b" style="left:0px;top:85px;width:48px;height:42px;background:#282828;"></div>
<div class="b" style="left:0px;top:128px;width:48px;height:42px;background:#282828;"></div>
<div class="b" style="left:0px;top:171px;width:48px;height:42px;background:#282828;"></div>
<div class="b" style="left:0px;top:214px;width:48px;height:42px;background:#282828;"></div>
<div class="b" style="left:0px;top:257px;width:48px;height:42px;background:#282828;"></div>
<div class="b" style="left:0px;top:300px;width:48px;height:42px;background:#282828;"></div>
<div class="b" style="left:0px;top:343px;width:48px;height:27px;background:#282828;"></div>
</div>
<svg class="b" style="left:11px;top:137px;" width="48" height="42" viewBox="0 0 48 42"><rect x="10.6" y="6.6" width="27.4" height="27.4" fill="none" stroke="#d9a34f" stroke-width="1.9" stroke-dasharray="5.2 2.2" stroke-dashoffset="2.6"/><path d="M20.2 13.4 V27.4 L23.8 23.8 L30.2 22.6 Z" fill="#dcdcdc"/><path d="M45.5 39 L45.5 34.5 L41.0 39 Z" fill="#8a8a8a"/></svg>
<svg class="b" style="left:11px;top:179px;" width="48" height="42" viewBox="0 0 48 42"><path d="M36.24 14.21 A14 14 0 0 1 36.24 27.79" fill="none" stroke="#ffffff" stroke-width="1.8"/><path d="M36.00 28.21 A14 14 0 0 1 31.21 33.00" fill="none" stroke="#c04a4a" stroke-width="1.8"/><path d="M30.79 33.24 A14 14 0 0 1 17.21 33.24" fill="none" stroke="#ffffff" stroke-width="1.8"/><path d="M16.79 33.00 A14 14 0 0 1 12.00 28.21" fill="none" stroke="#c04a4a" stroke-width="1.8"/><path d="M11.76 27.79 A14 14 0 0 1 11.76 14.21" fill="none" stroke="#ffffff" stroke-width="1.8"/><path d="M12.00 13.79 A14 14 0 0 1 16.79 9.00" fill="none" stroke="#c04a4a" stroke-width="1.8"/><path d="M17.21 8.76 A14 14 0 0 1 30.79 8.76" fill="none" stroke="#ffffff" stroke-width="1.8"/><path d="M31.21 9.00 A14 14 0 0 1 36.00 13.79" fill="none" stroke="#c04a4a" stroke-width="1.8"/><path d="M15 21 H22 M26 21 H33 M24 12 V19 M24 23 V30" stroke="#8a8a8a" stroke-width="1.5" fill="none"/></svg>
<svg class="b" style="left:11px;top:229px;" width="48" height="42" viewBox="0 0 48 42"><path d="M24 5.6 L28 11.2 H20 Z M24 34.6 L28 29 H20 Z M9.4 20 L15.2 16 V24 Z M38.6 20 L32.8 16 V24 Z" fill="#f0f0f0"/><path d="M24 12.6 V16 M24 24 V27.4 M16.6 20 H20 M28 20 H31.4" stroke="#f0f0f0" stroke-width="1.7" fill="none"/></svg>
<svg class="b" style="left:11px;top:271px;" width="48" height="42" viewBox="0 0 48 42"><path d="M14.2 15.6 A11.6 11.6 0 0 1 33.6 14.4" fill="none" stroke="#e6e6e6" stroke-width="1.5"/><path d="M34 26.4 A11.6 11.6 0 0 1 14.6 27.4" fill="none" stroke="#e6e6e6" stroke-width="1.5"/><path d="M9.4 20 H16.6 L13 25.4 Z M31.4 22.4 H38.6 L35 17 Z" fill="#e6e6e6"/><path d="M24 16.4 L28.6 21 L24 25.6 L19.4 21 Z" fill="#b4b4b4"/></svg>
<svg class="b" style="left:11px;top:314px;" width="48" height="42" viewBox="0 0 48 42"><path d="M14.2 18.6 V10.6 H34.4 V30.8 H26.2" fill="none" stroke="#b4b4b4" stroke-width="1.5"/><rect x="12.8" y="20.6" width="11.4" height="11.4" fill="#e6e6e6"/><path d="M25.6 19.4 L31 14" stroke="#e6e6e6" stroke-width="1.6"/><path d="M27.6 13 H32 V17.4 Z" fill="#e6e6e6"/><path d="M45.5 39 L45.5 34.5 L41.0 39 Z" fill="#8a8a8a"/></svg>
<svg class="b" style="left:11px;top:357px;" width="48" height="42" viewBox="0 0 48 42"><circle cx="24" cy="21" r="12.6" fill="none" stroke="#d4d4d4" stroke-width="1.4"/><path d="M24 7.4 L27.4 12.6 H20.6 Z M24 34.6 L27.4 29.4 H20.6 Z M10.4 21 L15.6 17.6 V24.4 Z M37.6 21 L32.4 17.6 V24.4 Z" fill="#e6e6e6" stroke="#282828" stroke-width="1.2" paint-order="stroke"/><rect x="19.2" y="16.2" width="9.6" height="9.6" fill="#e6e6e6"/></svg>
<svg class="b" style="left:11px;top:407px;" width="48" height="42" viewBox="0 0 48 42"><path d="M11 29 Q15 33 21 29.4 Q27 22.4 32.6 23.4 Q37 24.4 39.6 29.4" fill="none" stroke="#8fdcab" stroke-width="1.5"/><g transform="translate(9.4 28.2) rotate(-45)"><path d="M0 0 L5 -3 H27 Q28.4 -3 28.4 -1.6 V1.6 Q28.4 3 27 3 H5 Z" fill="#e6e6e6"/><path d="M5.8 -3 V3 M23.4 -3 V3" stroke="#282828" stroke-width="1.1"/></g><path d="M45.5 39 L45.5 34.5 L41.0 39 Z" fill="#8a8a8a"/></svg>
<svg class="b" style="left:11px;top:449px;" width="48" height="42" viewBox="0 0 48 42"><path d="M20 16.4 A14.6 14.6 0 0 1 34.6 31 H20 Z" fill="#8fdcab"/><path d="M20 14.6 A16.4 16.4 0 0 1 36.4 31" fill="none" stroke="#8fdcab" stroke-width="1.1"/><path d="M12.4 6.6 H20 V31 H38.4 V36 H12.4 Z" fill="#e6e6e6"/><path d="M15.8 9.0 H19.4" stroke="#282828" stroke-width="0.7"/><path d="M17.2 10.9 H19.4" stroke="#282828" stroke-width="0.7"/><path d="M15.8 12.8 H19.4" stroke="#282828" stroke-width="0.7"/><path d="M17.2 14.7 H19.4" stroke="#282828" stroke-width="0.7"/><path d="M15.8 16.6 H19.4" stroke="#282828" stroke-width="0.7"/><path d="M17.2 18.5 H19.4" stroke="#282828" stroke-width="0.7"/><path d="M15.8 20.4 H19.4" stroke="#282828" stroke-width="0.7"/><path d="M17.2 22.3 H19.4" stroke="#282828" stroke-width="0.7"/><path d="M15.8 24.2 H19.4" stroke="#282828" stroke-width="0.7"/><path d="M17.2 26.1 H19.4" stroke="#282828" stroke-width="0.7"/><path d="M15.8 28.0 H19.4" stroke="#282828" stroke-width="0.7"/><path d="M21.6 34.6 V31.6" stroke="#282828" stroke-width="0.7"/><path d="M23.5 33.4 V31.6" stroke="#282828" stroke-width="0.7"/><path d="M25.4 34.6 V31.6" stroke="#282828" stroke-width="0.7"/><path d="M27.3 33.4 V31.6" stroke="#282828" stroke-width="0.7"/><path d="M29.2 34.6 V31.6" stroke="#282828" stroke-width="0.7"/><path d="M31.1 33.4 V31.6" stroke="#282828" stroke-width="0.7"/><path d="M33.0 34.6 V31.6" stroke="#282828" stroke-width="0.7"/><path d="M34.9 33.4 V31.6" stroke="#282828" stroke-width="0.7"/><path d="M36.8 34.6 V31.6" stroke="#282828" stroke-width="0.7"/></svg>
<svg class="b" style="left:11px;top:499px;" width="48" height="42" viewBox="0 0 48 42"><path d="M13 4.6 V14 M8.3 9.3 H17.7" stroke="#8fdcab" stroke-width="2" fill="none"/><path d="M14.8 16.6 H33 V33.6 H14.8 Z M14.8 16.6 L20.6 10.8 H38.8 L33 16.6 M38.8 10.8 V27.8 L33 33.6" fill="none" stroke="#8fdcab" stroke-width="1.2" stroke-linejoin="round"/><path d="M45.5 39 L45.5 34.5 L41.0 39 Z" fill="#8a8a8a"/></svg>
<svg class="b" style="left:11px;top:548px;" width="48" height="42" viewBox="0 0 48 42"><path d="M11.4 17.8 V31.6 H30.2 V17.8 M30.2 31.6 L36.6 26 V12.4" fill="none" stroke="#c4c4c4" stroke-width="1.3"/><path d="M11.4 9.8 L17.6 4.4 H36.8 V12.4 L30.2 17.8 H11.4 Z" fill="#8fdcab"/><path d="M11.4 9.8 H30.2 L36.8 4.4 M30.2 9.8 V17.8" fill="none" stroke="#c9efd8" stroke-width="0.9"/><path d="M45.5 39 L45.5 34.5 L41.0 39 Z" fill="#8a8a8a"/></svg>
<svg class="b" style="left:11px;top:590px;" width="48" height="42" viewBox="0 0 48 42"><path d="M11.6 15 L18 8.6 H36.6 V26 L30.2 32.6 M30.2 15 L36.6 8.6" fill="none" stroke="#c4c4c4" stroke-width="1.2"/><rect x="11.6" y="15" width="18.6" height="17.6" fill="#8fdcab" stroke="#c4c4c4" stroke-width="1.2"/><rect x="17.4" y="20.4" width="7" height="6.8" fill="#222"/><path d="M11.6 15 L17.4 20.4 M30.2 15 L24.4 20.4 M11.6 32.6 L17.4 27.2 M30.2 32.6 L24.4 27.2" stroke="#e0e0e0" stroke-width="1" fill="none"/></svg>
<svg class="b" style="left:11px;top:633px;" width="48" height="42" viewBox="0 0 48 42"><path d="M11.6 21 V32.4 H30.2 V21 M30.2 32.4 L36.6 26.6 V15.6" fill="none" stroke="#c4c4c4" stroke-width="1.3"/><path d="M11.6 21 L14.6 14.4 H26.8 L30.2 21 Z M26.8 14.4 L30.6 9.6 L36.6 15.6 L30.2 21 Z" fill="#8fdcab"/><path d="M14.6 14.4 L19 9.2 H30.4 L36.6 15.6 M26.8 14.4 L30.4 9.2" fill="none" stroke="#c4c4c4" stroke-width="1.2"/></svg>
<svg class="b" style="left:11px;top:677px;" width="48" height="42" viewBox="0 0 48 42"><path d="M11.6 14.6 H30 V31.6 H11.6 Z M11.6 14.6 L18.0 8.399999999999999 H36.4 L30 14.6 M36.4 8.399999999999999 V25.400000000000002 L30 31.6" fill="none" stroke="#c4c4c4" stroke-width="1.3" stroke-linejoin="round"/><path d="M17.4 14.4 H24.2 M17.4 31.6 H24.2" stroke="#282828" stroke-width="2.2"/><path d="M20.8 32.4 V15.6 Q20.8 12 27 7.6" fill="none" stroke="#8fdcab" stroke-width="1.5"/><path d="M45.5 39 L45.5 34.5 L41.0 39 Z" fill="#8a8a8a"/></svg>
<svg class="b" style="left:11px;top:720px;" width="48" height="42" viewBox="0 0 48 42"><path d="M11.6 14.6 H30 V31.6 H11.6 Z M11.6 14.6 L18.0 8.399999999999999 H36.4 L30 14.6 M36.4 8.399999999999999 V25.400000000000002 L30 31.6" fill="none" stroke="#c4c4c4" stroke-width="1.3" stroke-linejoin="round"/><path d="M26 7.6 L18 13.6 L25.8 32" fill="none" stroke="#8fdcab" stroke-width="1.4"/><circle cx="26" cy="7.6" r="2.1" fill="#8fdcab"/><circle cx="18" cy="13.6" r="2.1" fill="#8fdcab"/><circle cx="25.8" cy="32" r="2.1" fill="#8fdcab"/><path d="M45.5 39 L45.5 34.5 L41.0 39 Z" fill="#8a8a8a"/></svg>
<svg class="b" style="left:11px;top:762.8px;" width="48" height="42" viewBox="0 0 48 42"><path d="M21.2 7.4 L34.8 12.2 L35 31 H13.6 L13.4 19 Q14 11.4 21.2 7.4 Z" fill="#8fdcab"/><circle cx="21.2" cy="7.4" r="2.2" fill="#f0f0f0" stroke="#282828" stroke-width="0.8"/><circle cx="34.8" cy="12.2" r="2.2" fill="#f0f0f0" stroke="#282828" stroke-width="0.8"/><circle cx="35" cy="31" r="2.2" fill="#f0f0f0" stroke="#282828" stroke-width="0.8"/><circle cx="13.6" cy="31" r="2.2" fill="#f0f0f0" stroke="#282828" stroke-width="0.8"/><circle cx="13.4" cy="19" r="2.2" fill="#f0f0f0" stroke="#282828" stroke-width="0.8"/></svg>
<svg class="b" style="left:11px;top:805px;" width="48" height="42" viewBox="0 0 48 42"><path d="M24 22.4 V8.4 A14 14 0 1 0 38 22.4 Z" fill="#8fdcab"/><path d="M24 22.4 L33.6 12.6 A14 14 0 0 1 38 22.4 Z" fill="#8fdcab"/><path d="M24 22.4 L14.1 12.5 M24 22.4 H10 M24 22.4 L14.1 32.3 M24 22.4 V36.4 M24 22.4 L33.9 32.3 M24 22.4 H38 M24 22.4 L33.6 12.6" stroke="#282828" stroke-width="1" fill="none"/><path d="M14.4 9.6 Q19.6 5 25.6 5.4 V20.4" fill="none" stroke="#c4c4c4" stroke-width="1.2"/><path d="M34.6 11.4 Q39 14.4 38 22.4 Q37.4 25.4 36 25.6" fill="none" stroke="#c4c4c4" stroke-width="1.2"/></svg>
<svg class="b" style="left:11px;top:848px;" width="48" height="42" viewBox="0 0 48 42"><path d="M23.4 7.6 Q32 8.4 34.6 13.6 Q36.4 18.6 35 25 Q32 29.8 23.2 30.8 Q15.2 29.6 12.8 25.4 Q11.6 19.6 13.6 13.4 Q16.4 8.6 23.4 7.6 Z" fill="#d7c1ea"/><path d="M23.4 7.6 Q21 14 22 21.6 Q22 27 23.2 30.8 M12.4 21.6 Q22 20.6 35.6 20.4 M14 12.8 Q19 11.6 22.2 12 M24 7.8 Q25 10.4 27 11.4 Q31 11 34.6 13.6 M22 21.6 Q26.6 23.4 35 25" fill="none" stroke="#282828" stroke-width="1"/><path d="M45.5 39 L45.5 34.5 L41.0 39 Z" fill="#8a8a8a"/></svg>
<svg class="b" style="left:11px;top:891px;" width="48" height="27" viewBox="0 0 48 27"><path d="M8 5.6 L11.6 2.6 V4.6 H15 V6.6 H11.6 V8.6 Z" fill="#d7c1ea"/><path d="M11.8 30 V15.4 L18 8.6 H36.4 V30 M30 30 V15 H16 M30 15 L36.4 8.6" fill="none" stroke="#d8d8d8" stroke-width="1.4"/><path d="M15.8 30 V15.8 L22.4 8.6" fill="none" stroke="#d7c1ea" stroke-width="1.6"/></svg>
<div class="b" style="left:11px;top:918px;width:48px;height:6px;background:#181818;"></div>
<span class="t " style="left:81.5px;top:135.5px;height:20px;line-height:20px;font-size:14.7px;color:#ffffff;text-shadow:0 0 2px rgba(0,0,0,0.9),1px 1px 1px rgba(0,0,0,0.6);-webkit-text-stroke:0.3px #ffffff;">Bottom Orthographic</span>
<span class="t " style="left:81.5px;top:157.5px;height:20px;line-height:20px;font-size:14.7px;color:#ffffff;text-shadow:0 0 2px rgba(0,0,0,0.9),1px 1px 1px rgba(0,0,0,0.6);-webkit-text-stroke:0.3px #ffffff;">(1) Cube</span>
<span class="t " style="left:81.5px;top:179.5px;height:20px;line-height:20px;font-size:14.7px;color:#ffffff;text-shadow:0 0 2px rgba(0,0,0,0.9),1px 1px 1px rgba(0,0,0,0.6);-webkit-text-stroke:0.3px #ffffff;">10 Centimeters</span>
<svg class="b" style="left:780px;top:236px;" width="50" height="22" viewBox="0 0 50 22"><path d="M19 10.5 H7.8 M13.2 5.6 L7.6 10.5 L13.2 15.4" fill="none" stroke="#000" stroke-width="2" stroke-linejoin="miter"/><path d="M31 10.5 H42.2 M36.8 5.6 L42.4 10.5 L36.8 15.4" fill="none" stroke="#000" stroke-width="2" stroke-linejoin="miter"/></svg>
<svg class="b" style="left:763px;top:461px;" width="60" height="60" viewBox="0 0 60 60"><path d="M5 30 H23.8 M36.2 30 H55 M30 5 V23.6 M30 36.2 V54.8" stroke="#696b6b" stroke-width="1.8" fill="none"/><circle cx="30" cy="30" r="12.6" fill="none" stroke="#ffffff" stroke-width="1.5"/><circle cx="30" cy="30" r="12.6" fill="none" stroke="#ff2020" stroke-width="1.5" stroke-dasharray="2.3 4.297" transform="rotate(10 30 30)"/><circle cx="30" cy="30" r="3.1" fill="#2a2f3a"/><circle cx="30" cy="30" r="2.3" fill="#f5a21c"/></svg>
<svg class="b" style="left:1460px;top:125px;" width="130" height="130" viewBox="0 0 130 130"><path d="M63 22 V52 M63 64 V94" stroke="#7ab317" stroke-width="2"/><path d="M33 63 H52 M74 63 H93" stroke="#dc3a54" stroke-width="2"/><circle cx="63" cy="23" r="9.4" fill="#556630" stroke="#7ab317" stroke-width="1.4"/><circle cx="23" cy="63" r="9.4" fill="#6b3b44" stroke="#dc3a54" stroke-width="1.4"/><circle cx="103.2" cy="63" r="10" fill="#d63a53"/><circle cx="63" cy="103.2" r="10" fill="#76b21a"/><circle cx="63" cy="63" r="10.3" fill="#2e8cf2" stroke="#b4d3f7" stroke-width="1.2"/></svg>
<span class="t" style="left:1548.3px;width:30px;text-align:center;top:178.6px;height:20px;line-height:20px;font-size:12.6px;color:#3a0c14;font-weight:bold;">X</span>
<span class="t" style="left:1508.0px;width:30px;text-align:center;top:219.0px;height:20px;line-height:20px;font-size:12.6px;color:#1d2e05;font-weight:bold;">Y</span>
<span class="t" style="left:1508.2px;width:30px;text-align:center;top:178.4px;height:20px;line-height:20px;font-size:12.6px;color:#0d2747;font-weight:bold;letter-spacing:0.6px">-Z</span>
<div class="b" style="left:1575px;top:145px;width:10px;height:17px;background:#4a4a4a;border-radius:4px 0 0 4px;"></div>
<svg class="b" style="left:1577px;top:148px;" width="8" height="11" viewBox="0 0 8 11"><path d="M6.5 1 L1.5 5.5 L6.5 10" fill="none" stroke="#bdbdbd" stroke-width="1.2"/></svg>
<div class="b" style="left:1540.2px;top:239.5px;width:34px;height:34px;background:rgba(0,0,0,0.2);border-radius:50%;"></div>
<div class="b" style="left:1540.2px;top:276.8px;width:34px;height:34px;background:rgba(0,0,0,0.2);border-radius:50%;"></div>
<div class="b" style="left:1540.2px;top:314px;width:34px;height:34px;background:rgba(0,0,0,0.2);border-radius:50%;"></div>
<div class="b" style="left:1540.2px;top:351.3px;width:34px;height:34px;background:rgba(0,0,0,0.2);border-radius:50%;"></div>
<svg class="b" style="left:1540px;top:239.5px;" width="34" height="34" viewBox="0 0 34 34"><path d="M13.6 20.4 L8 26" stroke="#dcdcdc" stroke-width="2.6" stroke-linecap="round"/><circle cx="19.4" cy="15" r="8.2" fill="#dcdcdc"/><path d="M19.4 10.6 V19.4 M15 15 H23.8" stroke="#353535" stroke-width="1.3"/></svg>
<svg class="b" style="left:1540px;top:276.8px;" width="34" height="34" viewBox="0 0 34 34"><path d="M7.6 17.4 Q9.4 15.6 11.2 17.4 L13.4 20 L12.2 9.6 Q12.4 7.8 13.8 7.8 Q15.2 7.8 15.4 9.4 L16.2 15.4 L16.2 7.6 Q16.4 6 17.8 6 Q19.2 6 19.4 7.6 L19.6 15.4 L20.6 8.6 Q21 7 22.2 7.2 Q23.6 7.6 23.4 9.2 L22.8 16.4 L24.6 11.6 Q25.2 10.4 26.2 10.8 Q27.4 11.4 27 12.8 L24.6 21.6 Q23.4 26.8 18.6 27.4 Q14.4 27.6 12 24 Z" fill="#dcdcdc"/></svg>
<svg class="b" style="left:1539.4px;top:315px;" width="34" height="34" viewBox="0 0 34 34"><path d="M9.6 13.4 Q9.6 9.6 13.4 9.6 Q15.6 9.6 16.8 11.2 Q17.6 6.8 22 6.8 Q26.6 6.8 26.6 11.4 Q26.6 16 22 16 H13 Q9.6 16 9.6 13.4 Z" fill="none" stroke="#dcdcdc" stroke-width="1.5"/><circle cx="13.2" cy="12.8" r="1.1" fill="#dcdcdc"/><circle cx="22" cy="11.2" r="1.3" fill="#dcdcdc"/><rect x="13.4" y="19.4" width="8.4" height="6.6" rx="1" fill="none" stroke="#dcdcdc" stroke-width="1.5"/><path d="M23.6 22.8 L28 20 V25.6 Z" fill="none" stroke="#dcdcdc" stroke-width="1.2"/><path d="M10 21 H13 V23.4 H10 Z" fill="#dcdcdc"/></svg>
<svg class="b" style="left:1540px;top:351.3px;" width="34" height="34" viewBox="0 0 34 34"><rect x="8.2" y="7.8" width="19.4" height="19.4" fill="none" stroke="#dcdcdc" stroke-width="1.7"/><path d="M14.6 7.8 V27.2 M21.2 7.8 V27.2 M8.2 14.2 H27.6 M8.2 20.8 H27.6" stroke="#dcdcdc" stroke-width="1.5"/></svg>
<div class="b" style="left:1588px;top:63px;width:331px;height:297px;background:#282828;border-radius:6px;overflow:hidden;border:1px solid #343434;">
<div class="b" style="left:-1px;top:56px;width:331px;height:25px;background:#2b2b2b;"></div>
<div class="b" style="left:-1px;top:106px;width:331px;height:25px;background:#2b2b2b;"></div>
<div class="b" style="left:-1px;top:156px;width:331px;height:25px;background:#2b2b2b;"></div>
<div class="b" style="left:-1px;top:206px;width:331px;height:25px;background:#2b2b2b;"></div>
<div class="b" style="left:-1px;top:256px;width:331px;height:25px;background:#2b2b2b;"></div>
<div class="b" style="left:-1px;top:306px;width:331px;height:25px;background:#2b2b2b;"></div>
<div class="b" style="left:-1px;top:106px;width:331px;height:25px;background:#334d80;"></div>
</div>
<div class="b" style="left:1598px;top:66px;width:40px;height:25px;background:#282828;border:1px solid #3d3d3d;border-radius:5px;"></div>
<div class="b" style="left:1644px;top:66px;width:40px;height:25px;background:#282828;border:1px solid #3d3d3d;border-radius:5px;"></div>
<div class="b" style="left:1703px;top:66px;width:148px;height:25px;background:#1d1d1d;border:1px solid #3d3d3d;border-radius:5px;"></div>
<div class="b" style="left:1870px;top:66px;width:40px;height:25px;background:#282828;border:1px solid #3d3d3d;border-radius:5px;"></div>
<svg class="b" style="left:1602px;top:68.5px;" width="20" height="20" viewBox="0 0 20 20"><rect x="1.6" y="1.6" width="6.4" height="3.8" rx="1" fill="#e6e6e6"/><rect x="11" y="9.3" width="9" height="3.8" rx="1" fill="#e6e6e6"/><rect x="11" y="15.5" width="9" height="3.8" rx="1" fill="#e6e6e6"/><path d="M5.3 5.4 V17.4 H10.4 M5.3 11.2 H10.4" fill="none" stroke="#a0a0a0" stroke-width="1.2"/></svg>
<svg class="b" style="left:1625px;top:76.5px;" width="8" height="5.5" viewBox="0 0 8 5.5"><path d="M0.5 0.5 L4.0 4.5 L7.5 0.5" fill="none" stroke="#e6e6e6" stroke-width="1.3" stroke-linecap="round" stroke-linejoin="round"/></svg>
<svg class="b" style="left:1648px;top:68.5px;" width="20" height="20" viewBox="0 0 20 20"><rect x="6.5" y="1.5" width="12" height="11" rx="1.5" fill="none" stroke="#e6e6e6" stroke-width="1.4"/><path d="M8 11.5 L12 4.5 L14 8 L15.2 6.8 L17.5 11.5 Z" fill="#e6e6e6"/><circle cx="16" cy="4.2" r="0.9" fill="#e6e6e6"/><path d="M4 4.5 V14 Q4 15 5 15 H16" fill="none" stroke="#e6e6e6" stroke-width="1.3" opacity="0.85"/><path d="M1.5 7 V16.5 Q1.5 17.5 2.5 17.5 H13.5" fill="none" stroke="#e6e6e6" stroke-width="1.3" opacity="0.6"/></svg>
<svg class="b" style="left:1671px;top:76.5px;" width="8" height="5.5" viewBox="0 0 8 5.5"><path d="M0.5 0.5 L4.0 4.5 L7.5 0.5" fill="none" stroke="#e6e6e6" stroke-width="1.3" stroke-linecap="round" stroke-linejoin="round"/></svg>
<svg class="b" style="left:1708px;top:68.5px;" width="20" height="20" viewBox="0 0 20 20"><circle cx="12" cy="7.6" r="5.4" fill="none" stroke="#e6e6e6" stroke-width="1.5"/><path d="M8 11.8 L1.6 18.4" stroke="#e6e6e6" stroke-width="1.6" stroke-linecap="round"/></svg>
<span class="t " style="left:1736px;top:68.0px;height:20px;line-height:20px;font-size:14.5px;color:#777777;">Search</span>
<svg class="b" style="left:1872px;top:68.5px;" width="20" height="20" viewBox="0 0 20 20"><path d="M1.8 2.6 H17.8 L11.6 10.2 V16 L8 18.2 V10.2 Z" fill="none" stroke="#e6e6e6" stroke-width="1.5" stroke-linejoin="round"/></svg>
<svg class="b" style="left:1897px;top:76.5px;" width="8" height="5.5" viewBox="0 0 8 5.5"><path d="M0.5 0.5 L4.0 4.5 L7.5 0.5" fill="none" stroke="#e6e6e6" stroke-width="1.3" stroke-linecap="round" stroke-linejoin="round"/></svg>
<div class="b" style="left:1916px;top:68px;width:3px;height:19px;background:#4f4f4f;border-radius:1.5px;"></div>
<svg class="b" style="left:1616px;top:98px;" width="18" height="17" viewBox="0 0 18 17"><rect x="0" y="0" width="18" height="5.4" rx="0.8" fill="#e6e6e6"/><path d="M1.2 6.8 H16.8 V15.6 Q16.8 16.6 15.8 16.6 H2.2 Q1.2 16.6 1.2 15.6 Z" fill="#e6e6e6"/><rect x="6.4" y="8.6" width="5.2" height="2" rx="1" fill="#282828"/></svg>
<span class="t " style="left:1643.5px;top:98.8px;height:20px;line-height:20px;font-size:14.3px;color:#e6e6e6;">Scene Collection</span>
<svg class="b" style="left:1620px;top:130px;" width="11" height="7" viewBox="0 0 11 7"><path d="M0.8 0.8 L5.5 5.6 L10.2 0.8" fill="none" stroke="#e0e0e0" stroke-width="1.3"/></svg>
<div class="b" style="left:1638.5px;top:121.5px;width:24.5px;height:22px;background:#585858;border-radius:5px;border:1px solid #6a6a6a;"></div>
<svg class="b" style="left:1642px;top:125px;" width="18" height="17" viewBox="0 0 18 17"><rect x="0" y="0" width="18" height="5.4" rx="0.8" fill="#e6e6e6"/><path d="M1.2 6.8 H16.8 V15.6 Q16.8 16.6 15.8 16.6 H2.2 Q1.2 16.6 1.2 15.6 Z" fill="#e6e6e6"/><rect x="6.4" y="8.6" width="5.2" height="2" rx="1" fill="#585858"/></svg>
<span class="t " style="left:1668.5px;top:123.80000000000001px;height:20px;line-height:20px;font-size:14.3px;color:#e6e6e6;">Collection</span>
<div class="b" style="left:1624px;top:151px;width:1px;height:63px;background:#5a5a5a;"></div>
<svg class="b" style="left:1646.6px;top:153px;" width="7" height="11" viewBox="0 0 7 11"><path d="M0.8 0.8 L5.6 5.5 L0.8 10.2" fill="none" stroke="#e0e0e0" stroke-width="1.3"/></svg>
<svg class="b" style="left:1665px;top:148.5px;" width="22" height="20" viewBox="0 0 22 20"><path d="M1 6.4 Q1 2.6 4.8 2.6 Q7 2.6 8.2 4 Q9.4 0.6 13.2 0.6 Q17.6 0.6 17.6 5 Q17.6 8 15.4 9.2 V10.6 H5 Q1 10.6 1 6.4 Z" fill="#d88d4e"/><circle cx="4.8" cy="6.4" r="1.3" fill="#282828"/><circle cx="13.2" cy="4.8" r="1.5" fill="#282828"/><rect x="5.4" y="11.8" width="9.4" height="6.6" rx="1" fill="#d88d4e"/><path d="M15.6 15.2 L20.4 12 V18.6 Z" fill="#d88d4e"/><rect x="2.6" y="13" width="2.4" height="2.6" fill="#d88d4e"/></svg>
<span class="t " style="left:1693.3px;top:148.7px;height:20px;line-height:20px;font-size:14.3px;color:#e6e6e6;">Camera</span>
<div class="b" style="left:1769px;top:146.3px;width:24.6px;height:22.2px;background:#585858;border-radius:5px;border:1px solid #6a6a6a;"></div>
<svg class="b" style="left:1771.5px;top:148.5px;" width="20" height="18" viewBox="0 0 20 18"><path d="M2 6.6 Q2 3.4 5 3.4 Q6.8 3.4 7.8 4.6 Q8.8 1.4 12.4 1.4 Q16.4 1.4 16.4 5.2 Q16.4 9 12.4 9 H5 Q2 9 2 6.6 Z" fill="none" stroke="#22c9a5" stroke-width="1.3"/><circle cx="12.6" cy="5" r="1" fill="#22c9a5"/><rect x="6" y="11" width="7.4" height="5.4" rx="0.8" fill="none" stroke="#22c9a5" stroke-width="1.3"/><path d="M14.4 13.8 L18 11.4 V16.2 Z" fill="#22c9a5"/><path d="M3.4 12.4 H5.4 V14.6 H3.4 Z" fill="#22c9a5"/></svg>
<svg class="b" style="left:1590px;top:173px;" width="20" height="20" viewBox="0 0 20 20"><path d="M5.6 5.9 H12 M3.5 8 V14 M5.6 16.1 H13.2 M15.3 8 V14" stroke="#a8a8a8" stroke-width="1.2" fill="none"/><rect x="1.6" y="4" width="3.9" height="3.9" rx="0.9" fill="#334d80" stroke="#a8a8a8" stroke-width="1.3"/><rect x="1.6" y="14.2" width="3.9" height="3.9" rx="0.9" fill="#334d80" stroke="#a8a8a8" stroke-width="1.3"/><rect x="13.3" y="14.2" width="3.9" height="3.9" rx="0.9" fill="#334d80" stroke="#a8a8a8" stroke-width="1.3"/><rect x="12.5" y="1.3" width="6.2" height="6.2" rx="1" fill="#e6e6e6"/></svg>
<svg class="b" style="left:1646.6px;top:178px;" width="7" height="11" viewBox="0 0 7 11"><path d="M0.8 0.8 L5.6 5.5 L0.8 10.2" fill="none" stroke="#e0e0e0" stroke-width="1.3"/></svg>
<div class="b" style="left:1663.5px;top:171.6px;width:24.4px;height:22.2px;background:#6e82a8;border-radius:5px;border:1px solid #8093b6;"></div>
<svg class="b" style="left:1666px;top:174px;" width="20" height="18" viewBox="0 0 20 18"><path d="M2 1.6 H18 L10 16.4 Z" fill="#d88d4e"/><path d="M6.6 4.4 H13.4 L10 10.8 Z" fill="#5d73a0"/></svg>
<span class="t " style="left:1693.3px;top:173.7px;height:20px;line-height:20px;font-size:14.5px;color:#ffaf29;">Cube</span>
<div class="b" style="left:1752px;top:171.6px;width:24.6px;height:22.2px;background:#2f6a85;border-radius:5px;border:1px solid #47809a;"></div>
<svg class="b" style="left:1754.3px;top:173.6px;" width="20" height="18" viewBox="0 0 20 18"><path d="M4 3.6 H16 L10 14.6 Z" fill="none" stroke="#22c9a5" stroke-width="1.4"/><rect x="1.8" y="1.4" width="4.2" height="4.2" rx="1" fill="#2f6a85" stroke="#22c9a5" stroke-width="1.3"/><rect x="14" y="1.4" width="4.2" height="4.2" rx="1" fill="#2f6a85" stroke="#22c9a5" stroke-width="1.3"/><rect x="7.9" y="12.4" width="4.2" height="4.2" rx="1" fill="#2f6a85" stroke="#22c9a5" stroke-width="1.3"/></svg>
<svg class="b" style="left:1646.6px;top:203px;" width="7" height="11" viewBox="0 0 7 11"><path d="M0.8 0.8 L5.6 5.5 L0.8 10.2" fill="none" stroke="#e0e0e0" stroke-width="1.3"/></svg>
<svg class="b" style="left:1666px;top:198.6px;" width="18" height="20" viewBox="0 0 18 20"><path d="M9 0.6 Q16 0.8 16.4 7.2 Q16.2 10.4 13 12.8 V14 H5 V12.8 Q1.8 10.4 1.6 7.2 Q2 0.8 9 0.6 Z" fill="#d88d4e"/><path d="M5.6 15.2 H12.4 V16.4 H5.6 Z M6.6 17.4 H11.4 L10.2 19.2 H7.8 Z" fill="#d88d4e"/><path d="M5 6.8 H13 M6.6 6.8 V10.4 M11.4 6.8 V10.4" stroke="#282828" stroke-width="1.2" fill="none"/></svg>
<span class="t " style="left:1693.3px;top:198.7px;height:20px;line-height:20px;font-size:14.3px;color:#e6e6e6;">Light</span>
<svg class="b" style="left:1754px;top:197px;" width="18" height="22" viewBox="0 0 18 22"><circle cx="9" cy="8.6" r="7.4" fill="none" stroke="#22c9a5" stroke-width="1.3"/><circle cx="9" cy="8.6" r="1.3" fill="#22c9a5"/><path d="M9 10.4 V19.4" stroke="#22c9a5" stroke-width="1.2" stroke-dasharray="2.6 1.6"/></svg>
<div class="b" style="left:1839px;top:126.4px;width:13.4px;height:12.8px;background:#f0f0f0;border-radius:2px;"></div>
<svg class="b" style="left:1839px;top:126.4px;" width="13.4" height="12.8" viewBox="0 0 13.4 12.8"><path d="M2.8 6.6 L5.6 9.6 L10.8 3" fill="none" stroke="#1d1d1d" stroke-width="2"/></svg>
<svg class="b" style="left:1862px;top:127.19999999999999px;" width="18" height="12" viewBox="0 0 18 12"><path d="M0.6 6 Q4.4 0.6 9 0.6 Q13.6 0.6 17.4 6 Q13.6 11.4 9 11.4 Q4.4 11.4 0.6 6 Z" fill="#f0f0f0"/><circle cx="9" cy="6" r="3.8" fill="#2b2b2b"/><circle cx="9" cy="6" r="1.9" fill="#f0f0f0"/></svg>
<svg class="b" style="left:1887px;top:125.6px;" width="18" height="15" viewBox="0 0 18 15"><path d="M5.6 2.4 L6.8 0.4 H11.2 L12.4 2.4 H16 Q17.4 2.4 17.4 3.8 V13 Q17.4 14.4 16 14.4 H2 Q0.6 14.4 0.6 13 V3.8 Q0.6 2.4 2 2.4 Z" fill="#f0f0f0"/><circle cx="9" cy="8.4" r="4.5" fill="#2b2b2b"/><circle cx="9" cy="8.4" r="3.1" fill="none" stroke="#f0f0f0" stroke-width="1.3"/></svg>
<svg class="b" style="left:1862px;top:152.2px;" width="18" height="12" viewBox="0 0 18 12"><path d="M0.6 6 Q4.4 0.6 9 0.6 Q13.6 0.6 17.4 6 Q13.6 11.4 9 11.4 Q4.4 11.4 0.6 6 Z" fill="#f0f0f0"/><circle cx="9" cy="6" r="3.8" fill="#282828"/><circle cx="9" cy="6" r="1.9" fill="#f0f0f0"/></svg>
<svg class="b" style="left:1887px;top:150.6px;" width="18" height="15" viewBox="0 0 18 15"><path d="M5.6 2.4 L6.8 0.4 H11.2 L12.4 2.4 H16 Q17.4 2.4 17.4 3.8 V13 Q17.4 14.4 16 14.4 H2 Q0.6 14.4 0.6 13 V3.8 Q0.6 2.4 2 2.4 Z" fill="#f0f0f0"/><circle cx="9" cy="8.4" r="4.5" fill="#282828"/><circle cx="9" cy="8.4" r="3.1" fill="none" stroke="#f0f0f0" stroke-width="1.3"/></svg>
<svg class="b" style="left:1862px;top:177.2px;" width="18" height="12" viewBox="0 0 18 12"><path d="M0.6 6 Q4.4 0.6 9 0.6 Q13.6 0.6 17.4 6 Q13.6 11.4 9 11.4 Q4.4 11.4 0.6 6 Z" fill="#f0f0f0"/><circle cx="9" cy="6" r="3.8" fill="#334d80"/><circle cx="9" cy="6" r="1.9" fill="#f0f0f0"/></svg>
<svg class="b" style="left:1887px;top:175.6px;" width="18" height="15" viewBox="0 0 18 15"><path d="M5.6 2.4 L6.8 0.4 H11.2 L12.4 2.4 H16 Q17.4 2.4 17.4 3.8 V13 Q17.4 14.4 16 14.4 H2 Q0.6 14.4 0.6 13 V3.8 Q0.6 2.4 2 2.4 Z" fill="#f0f0f0"/><circle cx="9" cy="8.4" r="4.5" fill="#334d80"/><circle cx="9" cy="8.4" r="3.1" fill="none" stroke="#f0f0f0" stroke-width="1.3"/></svg>
<svg class="b" style="left:1862px;top:202.2px;" width="18" height="12" viewBox="0 0 18 12"><path d="M0.6 6 Q4.4 0.6 9 0.6 Q13.6 0.6 17.4 6 Q13.6 11.4 9 11.4 Q4.4 11.4 0.6 6 Z" fill="#f0f0f0"/><circle cx="9" cy="6" r="3.8" fill="#282828"/><circle cx="9" cy="6" r="1.9" fill="#f0f0f0"/></svg>
<svg class="b" style="left:1887px;top:200.6px;" width="18" height="15" viewBox="0 0 18 15"><path d="M5.6 2.4 L6.8 0.4 H11.2 L12.4 2.4 H16 Q17.4 2.4 17.4 3.8 V13 Q17.4 14.4 16 14.4 H2 Q0.6 14.4 0.6 13 V3.8 Q0.6 2.4 2 2.4 Z" fill="#f0f0f0"/><circle cx="9" cy="8.4" r="4.5" fill="#282828"/><circle cx="9" cy="8.4" r="3.1" fill="none" stroke="#f0f0f0" stroke-width="1.3"/></svg>
<div class="b" style="left:1588px;top:363px;width:331px;height:627px;background:#303030;border-radius:6px;overflow:hidden;border:1px solid #3a3a3a;">
<div class="b" style="left:-1px;top:30px;width:35px;height:600px;background:#1a1a1a;"></div>
<div class="b" style="left:1px;top:30px;width:33px;height:45px;background:#1e1e1e;border-radius:5px 0 0 5px;"></div>
<div class="b" style="left:1px;top:78px;width:33px;height:181px;background:#1e1e1e;border-radius:5px 0 0 5px;"></div>
<div class="b" style="left:1px;top:262px;width:33px;height:41px;background:#1e1e1e;border-radius:5px 0 0 5px;"></div>
<div class="b" style="left:1px;top:313px;width:33px;height:244px;background:#1e1e1e;border-radius:5px 0 0 5px;"></div>
<div class="b" style="left:1px;top:313px;width:33px;height:35px;background:#303030;border-radius:5px 0 0 5px;"></div>
<div class="b" style="left:44px;top:122px;width:276px;height:350.5px;background:#3d3d3d;border-radius:5px;"></div>
<div class="b" style="left:44px;top:474.5px;width:276px;height:30.0px;background:#3d3d3d;border-radius:5px;"></div>
<div class="b" style="left:44px;top:507.20000000000005px;width:276px;height:30.299999999999955px;background:#3d3d3d;border-radius:5px;"></div>
<div class="b" style="left:44px;top:540px;width:276px;height:30.600000000000023px;background:#3d3d3d;border-radius:5px;"></div>
<div class="b" style="left:44px;top:573.3px;width:276px;height:30.100000000000023px;background:#3d3d3d;border-radius:5px;"></div>
<div class="b" style="left:44px;top:606px;width:276px;height:30px;background:#3d3d3d;border-radius:5px;"></div>
<div class="b" style="left:320px;top:30px;width:9px;height:600px;background:#343434;"></div>
<div class="b" style="left:323px;top:42px;width:5px;height:444px;background:#434343;border-radius:2.5px;"></div>
</div>
<div class="b" style="left:1598px;top:366px;width:40px;height:25px;background:#282828;border:1px solid #3d3d3d;border-radius:5px;"></div>
<div class="b" style="left:1674.5px;top:366px;width:147.5px;height:25px;background:#1d1d1d;border:1px solid #3d3d3d;border-radius:5px;"></div>
<div class="b" style="left:1884px;top:366px;width:25.5px;height:25px;background:#282828;border:1px solid #3d3d3d;border-radius:5px;"></div>
<svg class="b" style="left:1603px;top:368.5px;" width="20" height="20" viewBox="0 0 20 20"><rect x="1" y="1.6" width="17.4" height="7.4" rx="3.7" fill="#e6e6e6"/><rect x="8.2" y="3.2" width="8.6" height="4.2" rx="2.1" fill="#282828"/><rect x="1" y="11" width="17.4" height="7.4" rx="3.7" fill="#e6e6e6"/><rect x="12.4" y="12.6" width="4.4" height="4.2" rx="1.6" fill="#282828"/></svg>
<svg class="b" style="left:1625px;top:376.5px;" width="8" height="5.5" viewBox="0 0 8 5.5"><path d="M0.5 0.5 L4.0 4.5 L7.5 0.5" fill="none" stroke="#e6e6e6" stroke-width="1.3" stroke-linecap="round" stroke-linejoin="round"/></svg>
<svg class="b" style="left:1680px;top:368.5px;" width="20" height="20" viewBox="0 0 20 20"><circle cx="12" cy="7.6" r="5.4" fill="none" stroke="#e6e6e6" stroke-width="1.5"/><path d="M8 11.8 L1.6 18.4" stroke="#e6e6e6" stroke-width="1.6" stroke-linecap="round"/></svg>
<span class="t " style="left:1707.5px;top:368.0px;height:20px;line-height:20px;font-size:14.5px;color:#777777;">Search</span>
<svg class="b" style="left:1892.7px;top:376.5px;" width="8" height="5.5" viewBox="0 0 8 5.5"><path d="M0.5 0.5 L4.0 4.5 L7.5 0.5" fill="none" stroke="#e6e6e6" stroke-width="1.3" stroke-linecap="round" stroke-linejoin="round"/></svg>
<svg class="b" style="left:1636px;top:408px;" width="18" height="18" viewBox="0 0 19 19"><rect x="4.6" y="4.6" width="9.8" height="9.8" fill="#e6e6e6"/><path d="M0.8 5 V2.4 Q0.8 0.8 2.4 0.8 H5 M14 0.8 H16.6 Q18.2 0.8 18.2 2.4 V5 M18.2 14 V16.6 Q18.2 18.2 16.6 18.2 H14 M5 18.2 H2.4 Q0.8 18.2 0.8 16.6 V14" fill="none" stroke="#9a9a9a" stroke-width="1.5"/></svg>
<span class="t " style="left:1665.5px;top:406.3px;height:20px;line-height:20px;font-size:14.7px;color:#e6e6e6;">Cube</span>
<svg class="b" style="left:1888px;top:406px;" width="20" height="20" viewBox="0 0 20 20"><path d="M13.6 2.6 L18.8 7.5 L14.3 11.5 L13.9 15.0 L12.2 16.9 L4.2 8.9 L5.9 7.2 L9.6 7.3 Z M6.8 14.4 L1.4 19.3" fill="none" stroke="#b4b4b4" stroke-width="1.2" stroke-linejoin="round" stroke-linecap="round"/></svg>
<div class="b" style="left:1633px;top:449px;width:277px;height:25px;background:#1d1d1d;border-radius:5px;border:1px solid #3d3d3d;"></div>
<div class="b" style="left:1633px;top:449px;width:39.5px;height:25px;background:#282828;border-radius:5px 0 0 5px;border:1px solid #3d3d3d;"></div>
<svg class="b" style="left:1638.4px;top:452.6px;" width="18" height="18" viewBox="0 0 19 19"><rect x="4.6" y="4.6" width="9.8" height="9.8" fill="#e6e6e6"/><path d="M0.8 5 V2.4 Q0.8 0.8 2.4 0.8 H5 M14 0.8 H16.6 Q18.2 0.8 18.2 2.4 V5 M18.2 14 V16.6 Q18.2 18.2 16.6 18.2 H14 M5 18.2 H2.4 Q0.8 18.2 0.8 16.6 V14" fill="none" stroke="#9a9a9a" stroke-width="1.5"/></svg>
<svg class="b" style="left:1660.5px;top:459.5px;" width="8" height="5.5" viewBox="0 0 8 5.5"><path d="M0.5 0.5 L4.0 4.5 L7.5 0.5" fill="none" stroke="#e6e6e6" stroke-width="1.3" stroke-linecap="round" stroke-linejoin="round"/></svg>
<span class="t " style="left:1682px;top:451.0px;height:20px;line-height:20px;font-size:14.7px;color:#e6e6e6;">Cube</span>
<svg class="b" style="left:1643px;top:498px;" width="12" height="8" viewBox="0 0 12 8"><path d="M0.8 0.8 L6 6 L11.2 0.8" fill="none" stroke="#e0e0e0" stroke-width="1.3"/></svg>
<span class="t " style="left:1660.5px;top:491.6px;height:20px;line-height:20px;font-size:14.7px;color:#e6e6e6;">Transform</span>
<svg class="b" style="left:1887px;top:498px;shape-rendering:crispEdges;" width="16" height="8" viewBox="0 0 16 8"><rect x="0" y="0" width="2" height="2" fill="#a0a0a0"/><rect x="0" y="2" width="2" height="1" fill="#0c0c0c"/><rect x="4" y="0" width="2" height="2" fill="#a0a0a0"/><rect x="4" y="2" width="2" height="1" fill="#0c0c0c"/><rect x="8" y="0" width="2" height="2" fill="#a0a0a0"/><rect x="8" y="2" width="2" height="1" fill="#0c0c0c"/><rect x="12" y="0" width="2" height="2" fill="#a0a0a0"/><rect x="12" y="2" width="2" height="1" fill="#0c0c0c"/><rect x="0" y="4" width="2" height="2" fill="#a0a0a0"/><rect x="0" y="6" width="2" height="1" fill="#0c0c0c"/><rect x="4" y="4" width="2" height="2" fill="#a0a0a0"/><rect x="4" y="6" width="2" height="1" fill="#0c0c0c"/><rect x="8" y="4" width="2" height="2" fill="#a0a0a0"/><rect x="8" y="6" width="2" height="1" fill="#0c0c0c"/><rect x="12" y="4" width="2" height="2" fill="#a0a0a0"/><rect x="12" y="6" width="2" height="1" fill="#0c0c0c"/></svg>
<div class="b" style="left:1742px;top:529px;width:107.2px;height:72.8px;background:#333333;border-radius:4px 0 0 4px;"></div>
<div class="b" style="left:1742px;top:528px;width:107.2px;height:23px;background:#545454;border-radius:4px 0 0 0;"></div>
<div class="b" style="left:1742px;top:551px;width:107.2px;height:1.3999999999999773px;background:#404040;"></div>
<span class="t" style="left:1695.0px;width:200px;text-align:center;top:529.0px;height:20px;line-height:20px;font-size:14.7px;color:#e6e6e6;letter-spacing:0.5px;">0 m</span>
<span class="t" style="right:189.5999999999999px;top:529.2px;height:20px;line-height:20px;font-size:14.7px;color:#e6e6e6;">Location X</span>
<svg class="b" style="left:1852.8px;top:532.1px;" width="18" height="14" viewBox="0 0 18 14"><path d="M1 7.4 V5.2 Q1 1 4.6 1 Q8 1 8 5.2 V6.4" fill="none" stroke="#9c9c9c" stroke-width="1.3"/><rect x="6.6" y="6.6" width="10.4" height="6.8" rx="1.2" fill="none" stroke="#9c9c9c" stroke-width="1.3"/><rect x="10.8" y="9" width="2" height="2.2" fill="#9c9c9c"/></svg>
<div class="b" style="left:1883.9px;top:537.2px;width:6.2px;height:6.2px;background:#e8e8e8;border-radius:50%;"></div>
<div class="b" style="left:1742px;top:552.4px;width:107.2px;height:23.4px;background:#545454;border-radius:0;"></div>
<div class="b" style="left:1742px;top:575.8px;width:107.2px;height:1.4000000000000696px;background:#404040;"></div>
<span class="t" style="left:1695.0px;width:200px;text-align:center;top:553.6px;height:20px;line-height:20px;font-size:14.7px;color:#e6e6e6;letter-spacing:0.5px;">0 m</span>
<span class="t" style="right:189.5999999999999px;top:553.8000000000001px;height:20px;line-height:20px;font-size:14.7px;color:#e6e6e6;">Y</span>
<svg class="b" style="left:1852.8px;top:556.7px;" width="18" height="14" viewBox="0 0 18 14"><path d="M1 7.4 V5.2 Q1 1 4.6 1 Q8 1 8 5.2 V6.4" fill="none" stroke="#9c9c9c" stroke-width="1.3"/><rect x="6.6" y="6.6" width="10.4" height="6.8" rx="1.2" fill="none" stroke="#9c9c9c" stroke-width="1.3"/><rect x="10.8" y="9" width="2" height="2.2" fill="#9c9c9c"/></svg>
<div class="b" style="left:1883.9px;top:561.8000000000001px;width:6.2px;height:6.2px;background:#e8e8e8;border-radius:50%;"></div>
<div class="b" style="left:1742px;top:577.2px;width:107.2px;height:23.6px;background:#545454;border-radius:0 0 0 4px;"></div>
<span class="t" style="left:1695.0px;width:200px;text-align:center;top:578.5px;height:20px;line-height:20px;font-size:14.7px;color:#e6e6e6;letter-spacing:0.5px;">0 m</span>
<span class="t" style="right:189.5999999999999px;top:578.7px;height:20px;line-height:20px;font-size:14.7px;color:#e6e6e6;">Z</span>
<svg class="b" style="left:1852.8px;top:581.6px;" width="18" height="14" viewBox="0 0 18 14"><path d="M1 7.4 V5.2 Q1 1 4.6 1 Q8 1 8 5.2 V6.4" fill="none" stroke="#9c9c9c" stroke-width="1.3"/><rect x="6.6" y="6.6" width="10.4" height="6.8" rx="1.2" fill="none" stroke="#9c9c9c" stroke-width="1.3"/><rect x="10.8" y="9" width="2" height="2.2" fill="#9c9c9c"/></svg>
<div class="b" style="left:1883.9px;top:586.7px;width:6.2px;height:6.2px;background:#e8e8e8;border-radius:50%;"></div>
<div class="b" style="left:1742px;top:610px;width:107.2px;height:72.8px;background:#333333;border-radius:4px 0 0 4px;"></div>
<div class="b" style="left:1742px;top:609px;width:107.2px;height:23px;background:#545454;border-radius:4px 0 0 0;"></div>
<div class="b" style="left:1742px;top:632px;width:107.2px;height:1.3999999999999773px;background:#404040;"></div>
<span class="t" style="left:1695.0px;width:200px;text-align:center;top:610.0px;height:20px;line-height:20px;font-size:14.7px;color:#e6e6e6;letter-spacing:0.5px;">0°</span>
<span class="t" style="right:189.5999999999999px;top:610.2px;height:20px;line-height:20px;font-size:14.7px;color:#e6e6e6;">Rotation X</span>
<svg class="b" style="left:1852.8px;top:613.1px;" width="18" height="14" viewBox="0 0 18 14"><path d="M1 7.4 V5.2 Q1 1 4.6 1 Q8 1 8 5.2 V6.4" fill="none" stroke="#9c9c9c" stroke-width="1.3"/><rect x="6.6" y="6.6" width="10.4" height="6.8" rx="1.2" fill="none" stroke="#9c9c9c" stroke-width="1.3"/><rect x="10.8" y="9" width="2" height="2.2" fill="#9c9c9c"/></svg>
<div class="b" style="left:1883.9px;top:618.2px;width:6.2px;height:6.2px;background:#e8e8e8;border-radius:50%;"></div>
<div class="b" style="left:1742px;top:633.4px;width:107.2px;height:23.4px;background:#545454;border-radius:0;"></div>
<div class="b" style="left:1742px;top:656.8px;width:107.2px;height:1.4000000000000696px;background:#404040;"></div>
<span class="t" style="left:1695.0px;width:200px;text-align:center;top:634.6px;height:20px;line-height:20px;font-size:14.7px;color:#e6e6e6;letter-spacing:0.5px;">0°</span>
<span class="t" style="right:189.5999999999999px;top:634.8000000000001px;height:20px;line-height:20px;font-size:14.7px;color:#e6e6e6;">Y</span>
<svg class="b" style="left:1852.8px;top:637.7px;" width="18" height="14" viewBox="0 0 18 14"><path d="M1 7.4 V5.2 Q1 1 4.6 1 Q8 1 8 5.2 V6.4" fill="none" stroke="#9c9c9c" stroke-width="1.3"/><rect x="6.6" y="6.6" width="10.4" height="6.8" rx="1.2" fill="none" stroke="#9c9c9c" stroke-width="1.3"/><rect x="10.8" y="9" width="2" height="2.2" fill="#9c9c9c"/></svg>
<div class="b" style="left:1883.9px;top:642.8000000000001px;width:6.2px;height:6.2px;background:#e8e8e8;border-radius:50%;"></div>
<div class="b" style="left:1742px;top:658.2px;width:107.2px;height:23.6px;background:#545454;border-radius:0 0 0 4px;"></div>
<span class="t" style="left:1695.0px;width:200px;text-align:center;top:659.5px;height:20px;line-height:20px;font-size:14.7px;color:#e6e6e6;letter-spacing:0.5px;">0°</span>
<span class="t" style="right:189.5999999999999px;top:659.7px;height:20px;line-height:20px;font-size:14.7px;color:#e6e6e6;">Z</span>
<svg class="b" style="left:1852.8px;top:662.6px;" width="18" height="14" viewBox="0 0 18 14"><path d="M1 7.4 V5.2 Q1 1 4.6 1 Q8 1 8 5.2 V6.4" fill="none" stroke="#9c9c9c" stroke-width="1.3"/><rect x="6.6" y="6.6" width="10.4" height="6.8" rx="1.2" fill="none" stroke="#9c9c9c" stroke-width="1.3"/><rect x="10.8" y="9" width="2" height="2.2" fill="#9c9c9c"/></svg>
<div class="b" style="left:1883.9px;top:667.7px;width:6.2px;height:6.2px;background:#e8e8e8;border-radius:50%;"></div>
<span class="t" style="right:189.5999999999999px;top:691.0px;height:20px;line-height:20px;font-size:14.7px;color:#e6e6e6;">Mode</span>
<div class="b" style="left:1742px;top:690px;width:107px;height:22.7px;background:#282828;border-radius:5px;"></div>
<span class="t " style="left:1751px;top:691.0px;height:20px;line-height:20px;font-size:14.2px;color:#e6e6e6;">XYZ Euler</span>
<svg class="b" style="left:1837.5px;top:700px;" width="8" height="5.5" viewBox="0 0 8 5.5"><path d="M0.5 0.5 L4.0 4.5 L7.5 0.5" fill="none" stroke="#e6e6e6" stroke-width="1.3" stroke-linecap="round" stroke-linejoin="round"/></svg>
<div class="b" style="left:1883.9px;top:698.6px;width:6.2px;height:6.2px;background:#e8e8e8;border-radius:50%;"></div>
<div class="b" style="left:1742px;top:722px;width:107.2px;height:72.8px;background:#333333;border-radius:4px 0 0 4px;"></div>
<div class="b" style="left:1742px;top:721px;width:107.2px;height:23px;background:#545454;border-radius:4px 0 0 0;"></div>
<div class="b" style="left:1742px;top:744px;width:107.2px;height:1.3999999999999773px;background:#404040;"></div>
<span class="t" style="left:1695.0px;width:200px;text-align:center;top:722.0px;height:20px;line-height:20px;font-size:14.7px;color:#e6e6e6;letter-spacing:0.5px;">2.004</span>
<span class="t" style="right:189.5999999999999px;top:722.2px;height:20px;line-height:20px;font-size:14.7px;color:#e6e6e6;">Scale X</span>
<svg class="b" style="left:1852.8px;top:725.1px;" width="18" height="14" viewBox="0 0 18 14"><path d="M1 7.4 V5.2 Q1 1 4.6 1 Q8 1 8 5.2 V6.4" fill="none" stroke="#9c9c9c" stroke-width="1.3"/><rect x="6.6" y="6.6" width="10.4" height="6.8" rx="1.2" fill="none" stroke="#9c9c9c" stroke-width="1.3"/><rect x="10.8" y="9" width="2" height="2.2" fill="#9c9c9c"/></svg>
<div class="b" style="left:1883.9px;top:730.2px;width:6.2px;height:6.2px;background:#e8e8e8;border-radius:50%;"></div>
<div class="b" style="left:1742px;top:745.4px;width:107.2px;height:23.4px;background:#545454;border-radius:0;"></div>
<div class="b" style="left:1742px;top:768.8px;width:107.2px;height:1.4000000000000696px;background:#404040;"></div>
<span class="t" style="left:1695.0px;width:200px;text-align:center;top:746.6px;height:20px;line-height:20px;font-size:14.7px;color:#e6e6e6;letter-spacing:0.5px;">1.000</span>
<span class="t" style="right:189.5999999999999px;top:746.8000000000001px;height:20px;line-height:20px;font-size:14.7px;color:#e6e6e6;">Y</span>
<svg class="b" style="left:1852.8px;top:749.7px;" width="18" height="14" viewBox="0 0 18 14"><path d="M1 7.4 V5.2 Q1 1 4.6 1 Q8 1 8 5.2 V6.4" fill="none" stroke="#9c9c9c" stroke-width="1.3"/><rect x="6.6" y="6.6" width="10.4" height="6.8" rx="1.2" fill="none" stroke="#9c9c9c" stroke-width="1.3"/><rect x="10.8" y="9" width="2" height="2.2" fill="#9c9c9c"/></svg>
<div class="b" style="left:1883.9px;top:754.8000000000001px;width:6.2px;height:6.2px;background:#e8e8e8;border-radius:50%;"></div>
<div class="b" style="left:1742px;top:770.2px;width:107.2px;height:23.6px;background:#545454;border-radius:0 0 0 4px;"></div>
<span class="t" style="left:1695.0px;width:200px;text-align:center;top:771.5px;height:20px;line-height:20px;font-size:14.7px;color:#e6e6e6;letter-spacing:0.5px;">0.089</span>
<span class="t" style="right:189.5999999999999px;top:771.7px;height:20px;line-height:20px;font-size:14.7px;color:#e6e6e6;">Z</span>
<svg class="b" style="left:1852.8px;top:774.6px;" width="18" height="14" viewBox="0 0 18 14"><path d="M1 7.4 V5.2 Q1 1 4.6 1 Q8 1 8 5.2 V6.4" fill="none" stroke="#9c9c9c" stroke-width="1.3"/><rect x="6.6" y="6.6" width="10.4" height="6.8" rx="1.2" fill="none" stroke="#9c9c9c" stroke-width="1.3"/><rect x="10.8" y="9" width="2" height="2.2" fill="#9c9c9c"/></svg>
<div class="b" style="left:1883.9px;top:779.7px;width:6.2px;height:6.2px;background:#e8e8e8;border-radius:50%;"></div>
<svg class="b" style="left:1663.5px;top:815.4px;" width="7" height="11" viewBox="0 0 7 11"><path d="M0.8 0.8 L5.6 5.5 L0.8 10.2" fill="none" stroke="#e0e0e0" stroke-width="1.3"/></svg>
<span class="t " style="left:1677.3px;top:810.8px;height:20px;line-height:20px;font-size:14.7px;color:#e6e6e6;">Delta Transform</span>
<svg class="b" style="left:1646px;top:848.6px;" width="7" height="11" viewBox="0 0 7 11"><path d="M0.8 0.8 L5.6 5.5 L0.8 10.2" fill="none" stroke="#e0e0e0" stroke-width="1.3"/></svg>
<span class="t " style="left:1660px;top:844.0px;height:20px;line-height:20px;font-size:14.7px;color:#e6e6e6;">Relations</span>
<svg class="b" style="left:1887px;top:850px;shape-rendering:crispEdges;" width="16" height="8" viewBox="0 0 16 8"><rect x="0" y="0" width="2" height="2" fill="#a0a0a0"/><rect x="0" y="2" width="2" height="1" fill="#0c0c0c"/><rect x="4" y="0" width="2" height="2" fill="#a0a0a0"/><rect x="4" y="2" width="2" height="1" fill="#0c0c0c"/><rect x="8" y="0" width="2" height="2" fill="#a0a0a0"/><rect x="8" y="2" width="2" height="1" fill="#0c0c0c"/><rect x="12" y="0" width="2" height="2" fill="#a0a0a0"/><rect x="12" y="2" width="2" height="1" fill="#0c0c0c"/><rect x="0" y="4" width="2" height="2" fill="#a0a0a0"/><rect x="0" y="6" width="2" height="1" fill="#0c0c0c"/><rect x="4" y="4" width="2" height="2" fill="#a0a0a0"/><rect x="4" y="6" width="2" height="1" fill="#0c0c0c"/><rect x="8" y="4" width="2" height="2" fill="#a0a0a0"/><rect x="8" y="6" width="2" height="1" fill="#0c0c0c"/><rect x="12" y="4" width="2" height="2" fill="#a0a0a0"/><rect x="12" y="6" width="2" height="1" fill="#0c0c0c"/></svg>
<svg class="b" style="left:1646px;top:881.6px;" width="7" height="11" viewBox="0 0 7 11"><path d="M0.8 0.8 L5.6 5.5 L0.8 10.2" fill="none" stroke="#e0e0e0" stroke-width="1.3"/></svg>
<span class="t " style="left:1660px;top:877.0px;height:20px;line-height:20px;font-size:14.7px;color:#e6e6e6;">Collections</span>
<svg class="b" style="left:1887px;top:883px;shape-rendering:crispEdges;" width="16" height="8" viewBox="0 0 16 8"><rect x="0" y="0" width="2" height="2" fill="#a0a0a0"/><rect x="0" y="2" width="2" height="1" fill="#0c0c0c"/><rect x="4" y="0" width="2" height="2" fill="#a0a0a0"/><rect x="4" y="2" width="2" height="1" fill="#0c0c0c"/><rect x="8" y="0" width="2" height="2" fill="#a0a0a0"/><rect x="8" y="2" width="2" height="1" fill="#0c0c0c"/><rect x="12" y="0" width="2" height="2" fill="#a0a0a0"/><rect x="12" y="2" width="2" height="1" fill="#0c0c0c"/><rect x="0" y="4" width="2" height="2" fill="#a0a0a0"/><rect x="0" y="6" width="2" height="1" fill="#0c0c0c"/><rect x="4" y="4" width="2" height="2" fill="#a0a0a0"/><rect x="4" y="6" width="2" height="1" fill="#0c0c0c"/><rect x="8" y="4" width="2" height="2" fill="#a0a0a0"/><rect x="8" y="6" width="2" height="1" fill="#0c0c0c"/><rect x="12" y="4" width="2" height="2" fill="#a0a0a0"/><rect x="12" y="6" width="2" height="1" fill="#0c0c0c"/></svg>
<svg class="b" style="left:1646px;top:914.6px;" width="7" height="11" viewBox="0 0 7 11"><path d="M0.8 0.8 L5.6 5.5 L0.8 10.2" fill="none" stroke="#e0e0e0" stroke-width="1.3"/></svg>
<span class="t " style="left:1660px;top:910.0px;height:20px;line-height:20px;font-size:14.7px;color:#e6e6e6;">Instancing</span>
<svg class="b" style="left:1887px;top:916px;shape-rendering:crispEdges;" width="16" height="8" viewBox="0 0 16 8"><rect x="0" y="0" width="2" height="2" fill="#a0a0a0"/><rect x="0" y="2" width="2" height="1" fill="#0c0c0c"/><rect x="4" y="0" width="2" height="2" fill="#a0a0a0"/><rect x="4" y="2" width="2" height="1" fill="#0c0c0c"/><rect x="8" y="0" width="2" height="2" fill="#a0a0a0"/><rect x="8" y="2" width="2" height="1" fill="#0c0c0c"/><rect x="12" y="0" width="2" height="2" fill="#a0a0a0"/><rect x="12" y="2" width="2" height="1" fill="#0c0c0c"/><rect x="0" y="4" width="2" height="2" fill="#a0a0a0"/><rect x="0" y="6" width="2" height="1" fill="#0c0c0c"/><rect x="4" y="4" width="2" height="2" fill="#a0a0a0"/><rect x="4" y="6" width="2" height="1" fill="#0c0c0c"/><rect x="8" y="4" width="2" height="2" fill="#a0a0a0"/><rect x="8" y="6" width="2" height="1" fill="#0c0c0c"/><rect x="12" y="4" width="2" height="2" fill="#a0a0a0"/><rect x="12" y="6" width="2" height="1" fill="#0c0c0c"/></svg>
<svg class="b" style="left:1646px;top:947.4px;" width="7" height="11" viewBox="0 0 7 11"><path d="M0.8 0.8 L5.6 5.5 L0.8 10.2" fill="none" stroke="#e0e0e0" stroke-width="1.3"/></svg>
<span class="t " style="left:1660px;top:942.8px;height:20px;line-height:20px;font-size:14.7px;color:#e6e6e6;">Motion Paths</span>
<svg class="b" style="left:1887px;top:949px;shape-rendering:crispEdges;" width="16" height="8" viewBox="0 0 16 8"><rect x="0" y="0" width="2" height="2" fill="#a0a0a0"/><rect x="0" y="2" width="2" height="1" fill="#0c0c0c"/><rect x="4" y="0" width="2" height="2" fill="#a0a0a0"/><rect x="4" y="2" width="2" height="1" fill="#0c0c0c"/><rect x="8" y="0" width="2" height="2" fill="#a0a0a0"/><rect x="8" y="2" width="2" height="1" fill="#0c0c0c"/><rect x="12" y="0" width="2" height="2" fill="#a0a0a0"/><rect x="12" y="2" width="2" height="1" fill="#0c0c0c"/><rect x="0" y="4" width="2" height="2" fill="#a0a0a0"/><rect x="0" y="6" width="2" height="1" fill="#0c0c0c"/><rect x="4" y="4" width="2" height="2" fill="#a0a0a0"/><rect x="4" y="6" width="2" height="1" fill="#0c0c0c"/><rect x="8" y="4" width="2" height="2" fill="#a0a0a0"/><rect x="8" y="6" width="2" height="1" fill="#0c0c0c"/><rect x="12" y="4" width="2" height="2" fill="#a0a0a0"/><rect x="12" y="6" width="2" height="1" fill="#0c0c0c"/></svg>
<svg class="b" style="left:1646px;top:980.0px;" width="7" height="11" viewBox="0 0 7 11"><path d="M0.8 0.8 L5.6 5.5 L0.8 10.2" fill="none" stroke="#e0e0e0" stroke-width="1.3"/></svg>
<span class="t " style="left:1660px;top:975.4px;height:20px;line-height:20px;font-size:14.7px;color:#e6e6e6;">Shading</span>
<svg class="b" style="left:1887px;top:981px;shape-rendering:crispEdges;" width="16" height="8" viewBox="0 0 16 8"><rect x="0" y="0" width="2" height="2" fill="#a0a0a0"/><rect x="0" y="2" width="2" height="1" fill="#0c0c0c"/><rect x="4" y="0" width="2" height="2" fill="#a0a0a0"/><rect x="4" y="2" width="2" height="1" fill="#0c0c0c"/><rect x="8" y="0" width="2" height="2" fill="#a0a0a0"/><rect x="8" y="2" width="2" height="1" fill="#0c0c0c"/><rect x="12" y="0" width="2" height="2" fill="#a0a0a0"/><rect x="12" y="2" width="2" height="1" fill="#0c0c0c"/><rect x="0" y="4" width="2" height="2" fill="#a0a0a0"/><rect x="0" y="6" width="2" height="1" fill="#0c0c0c"/><rect x="4" y="4" width="2" height="2" fill="#a0a0a0"/><rect x="4" y="6" width="2" height="1" fill="#0c0c0c"/><rect x="8" y="4" width="2" height="2" fill="#a0a0a0"/><rect x="8" y="6" width="2" height="1" fill="#0c0c0c"/><rect x="12" y="4" width="2" height="2" fill="#a0a0a0"/><rect x="12" y="6" width="2" height="1" fill="#0c0c0c"/></svg>
<div class="b" style="left:1588px;top:990px;width:332px;height:3px;background:#181818;"></div>
<svg class="b" style="left:1596px;top:412px;" width="22" height="22" viewBox="0 0 22 22"><path d="M4.5 1 V9.4" stroke="#b4b4b4" stroke-width="1.5"/><rect x="0.9" y="9.8" width="7.2" height="1.6" fill="#b4b4b4"/><ellipse cx="4.5" cy="15.3" rx="3.4" ry="4" fill="#b4b4b4"/><path d="M11 1 Q9.6 3 10.3 5 Q11 7.2 12.5 8.2 V17 Q12.5 19 14.5 19 Q16.5 19 16.5 17 V8.2 Q18 7.2 18.7 5 Q19.4 3 18 1 L16.6 1.6 V5 Q16.4 6 14.5 6 Q12.6 6 12.4 5 V1.6 Z" fill="#b4b4b4"/><circle cx="14.5" cy="16.6" r="0.8" fill="#1d1d1d"/></svg>
<svg class="b" style="left:1596.5px;top:456px;" width="19" height="19" viewBox="0 0 19 19"><path d="M5.4 3.4 Q5.4 1 7.6 1 H9.6 Q11.8 1 11.8 3.4" fill="none" stroke="#b4b4b4" stroke-width="1.5"/><rect x="0.4" y="3.4" width="18.2" height="14.2" rx="1.8" fill="#b4b4b4"/><rect x="2.6" y="6" width="10" height="9" fill="#1e1e1e"/><path d="M2.6 8.2 H12.6 M2.6 10.6 H12.6 M2.6 13 H12.6" stroke="#b4b4b4" stroke-width="1"/><circle cx="15.6" cy="8" r="1.2" fill="#1e1e1e"/><circle cx="15.6" cy="13" r="1.2" fill="#1e1e1e"/><rect x="15" y="0.8" width="1.6" height="1.4" fill="#b4b4b4"/></svg>
<svg class="b" style="left:1596.5px;top:491px;" width="19" height="19" viewBox="0 0 19 19"><path d="M0.4 3 Q0.4 0.8 2.6 0.8 H16.4 Q18.6 0.8 18.6 3 V8.6 Q18.6 9.6 17.6 9.6 H15.8 V5.4 H3.2 V9.6 H1.4 Q0.4 9.6 0.4 8.6 Z" fill="#b4b4b4"/><rect x="4.4" y="6.6" width="10.2" height="11.6" fill="#8c8c8c"/><path d="M5.8 16.4 L9 11.6 L12.2 16.4 Z" fill="#1e1e1e"/><circle cx="12.4" cy="9.6" r="1" fill="#b4b4b4"/></svg>
<svg class="b" style="left:1596px;top:526.4px;" width="19.5" height="19.5" viewBox="0 0 20 20"><rect x="6.5" y="1.5" width="12" height="11" rx="1.5" fill="none" stroke="#b4b4b4" stroke-width="1.4"/><path d="M8 11.5 L12 4.5 L14 8 L15.2 6.8 L17.5 11.5 Z" fill="#b4b4b4"/><circle cx="16" cy="4.2" r="0.9" fill="#b4b4b4"/><path d="M4 4.5 V14 Q4 15 5 15 H16" fill="none" stroke="#b4b4b4" stroke-width="1.3" opacity="0.85"/><path d="M1.5 7 V16.5 Q1.5 17.5 2.5 17.5 H13.5" fill="none" stroke="#b4b4b4" stroke-width="1.3" opacity="0.6"/></svg>
<svg class="b" style="left:1596.5px;top:561px;" width="20" height="20" viewBox="0 0 20 20"><path d="M5.8 1 Q6.5 0.2 7.2 1.2 L10.4 6.8 L7.4 14.8 L1.4 12.6 Q0.5 12 0.9 11.1 Z" fill="#b4b4b4"/><circle cx="15.4" cy="3.2" r="2.4" fill="#b4b4b4"/><circle cx="13" cy="13.2" r="5.2" fill="#1e1e1e"/><circle cx="13" cy="13.2" r="4.2" fill="#1e1e1e" stroke="#b4b4b4" stroke-width="1.3"/><path d="M10.8 12 Q11.2 10.9 12.3 10.7" stroke="#b4b4b4" stroke-width="0.9" fill="none"/></svg>
<svg class="b" style="left:1596px;top:596px;" width="20" height="20" viewBox="0 0 20 20"><circle cx="10" cy="10.4" r="7.8" fill="none" stroke="#c25a67" stroke-width="1.4"/><path d="M4.6 5.4 Q7 2.8 10.6 3.4 L11.6 5 L9.4 6 L10.4 8 L8 9.6 L6.4 8.4 L4 9.6 Z M10.4 11 L13.6 10.4 L16 12.6 L13.4 16.4 L11 15.6 L11.6 13.4 Z" fill="#c25a67"/><path d="M1 18.6 L4.4 15.6 M15.8 4.8 L18.8 1.8" stroke="#c25a67" stroke-width="1.3"/></svg>
<svg class="b" style="left:1597px;top:641px;" width="18.4" height="17.4" viewBox="0 0 18.4 17.4"><rect x="0.7" y="0.7" width="17" height="4.6" rx="0.8" fill="none" stroke="#b4b4b4" stroke-width="1.4"/><path d="M2 5.6 V15.6 Q2 16.6 3 16.6 H15.4 Q16.4 16.6 16.4 15.6 V5.6" fill="none" stroke="#b4b4b4" stroke-width="1.4"/><rect x="6.8" y="8.2" width="4.8" height="1.8" rx="0.9" fill="#b4b4b4"/></svg>
<svg class="b" style="left:1597px;top:685px;" width="18" height="18" viewBox="0 0 19 19"><rect x="4.6" y="4.6" width="9.8" height="9.8" fill="#e8964c"/><path d="M0.8 5 V2.4 Q0.8 0.8 2.4 0.8 H5 M14 0.8 H16.6 Q18.2 0.8 18.2 2.4 V5 M18.2 14 V16.6 Q18.2 18.2 16.6 18.2 H14 M5 18.2 H2.4 Q0.8 18.2 0.8 16.6 V14" fill="none" stroke="#a8703f" stroke-width="1.5"/></svg>
<svg class="b" style="left:1596px;top:719px;" width="20" height="20" viewBox="0 0 20 20"><path d="M10.6 1.4 Q6.4 2.4 6.6 6.6 Q6.8 8 7.4 8.8 L1.6 14.6 Q0.4 16 1.8 17.4 Q3.2 18.6 4.6 17.4 L10.4 11.8 Q14.4 13.4 17.2 10.4 Q18.8 8.4 18.4 6.4 L15.2 9.2 L11.8 8.6 L11 5.2 Z" fill="#5b8ddc"/></svg>
<svg class="b" style="left:1596px;top:753px;" width="20" height="22" viewBox="0 0 20 22"><path d="M4.4 5.2 H16.6 M4.4 5.2 V17.6 M4.4 5.2 L16 17.2" stroke="#5b8ddc" stroke-width="1.2" opacity="0.85"/><circle cx="4.4" cy="5.2" r="3.2" fill="#5b8ddc"/><circle cx="16.8" cy="5.2" r="1.7" fill="#5b8ddc" opacity="0.8"/><circle cx="4.4" cy="17.8" r="1.9" fill="#5b8ddc" opacity="0.8"/><circle cx="16.2" cy="17.4" r="2.6" fill="#5b8ddc" opacity="0.7"/></svg>
<svg class="b" style="left:1596px;top:788px;" width="20" height="20" viewBox="0 0 20 20"><path d="M13.4 3.6 A8 8 0 1 0 17 13.6" fill="none" stroke="#5b8ddc" stroke-width="1.3" opacity="0.85"/><circle cx="10" cy="10.8" r="3.7" fill="#5b8ddc"/><circle cx="16.4" cy="4.6" r="2.2" fill="#5b8ddc" opacity="0.85"/></svg>
<svg class="b" style="left:1596px;top:824px;" width="20" height="20" viewBox="0 0 20 20"><path d="M14.6 1.8 Q18.2 0.6 18.4 4.2 Q17.4 9 13.8 14.6 Q10.4 19.2 5.4 17.8 Q0.6 15.8 1.8 10.4 Q3.2 6.2 9 4 Z" fill="none" stroke="#5b8ddc" stroke-width="1.3"/><circle cx="8" cy="11.6" r="4.6" fill="none" stroke="#5b8ddc" stroke-width="1.3"/><circle cx="8" cy="11.6" r="2" fill="#5b8ddc"/><circle cx="15.4" cy="4.6" r="1.1" fill="#5b8ddc"/></svg>
<svg class="b" style="left:1596px;top:860px;" width="20" height="18" viewBox="0 0 20 18"><path d="M4 3.6 H16 L10 14.6 Z" fill="none" stroke="#20c08f" stroke-width="1.4"/><rect x="1.8" y="1.4" width="4.2" height="4.2" rx="1" fill="#1e1e1e" stroke="#20c08f" stroke-width="1.3"/><rect x="14" y="1.4" width="4.2" height="4.2" rx="1" fill="#1e1e1e" stroke="#20c08f" stroke-width="1.3"/><rect x="7.9" y="12.4" width="4.2" height="4.2" rx="1" fill="#1e1e1e" stroke="#20c08f" stroke-width="1.3"/></svg>
<svg class="b" style="left:1597px;top:895px;" width="18" height="18" viewBox="0 0 18 18"><circle cx="9" cy="9" r="8.4" fill="#c25a67"/><path d="M9 9 V0.6 A8.4 8.4 0 0 1 17.4 9 Z M9 9 V17.4 A8.4 8.4 0 0 1 0.6 9 Z" fill="#1d1d1d"/><circle cx="9" cy="9" r="8" fill="none" stroke="#c25a67" stroke-width="1.2"/></svg>
<div class="b" style="left:1px;top:922px;width:1584px;height:68.5px;background:#1d1d1d;border-radius:6px;overflow:hidden;border:1px solid #303030;">
<div class="b" style="left:-1px;top:-1px;width:1586px;height:32px;background:#303030;"></div>
</div>
<div class="b" style="left:10px;top:926px;width:40px;height:25px;background:#282828;border:1px solid #3a3a3a;border-radius:5px;"></div>
<svg class="b" style="left:15.5px;top:929px;" width="19" height="19" viewBox="0 0 19 19"><circle cx="9.5" cy="9.5" r="8.8" fill="#e6e6e6"/><path d="M11.6 4.6 L7.8 10 L11.4 13.6" fill="none" stroke="#282828" stroke-width="2" stroke-linejoin="miter"/></svg>
<svg class="b" style="left:37.5px;top:936.5px;" width="8" height="5.5" viewBox="0 0 8 5.5"><path d="M0.5 0.5 L4.0 4.5 L7.5 0.5" fill="none" stroke="#e6e6e6" stroke-width="1.3" stroke-linecap="round" stroke-linejoin="round"/></svg>
<div class="b" style="left:56px;top:926px;width:93px;height:25px;background:#282828;border:1px solid #3a3a3a;border-radius:5px 0 0 5px;"></div>
<div class="b" style="left:148px;top:926px;width:77px;height:25px;background:#282828;border:1px solid #3a3a3a;border-radius:0 5px 5px 0;"></div>
<span class="t " style="left:66.4px;top:928.0px;height:20px;line-height:20px;font-size:14.5px;color:#e6e6e6;">Playback</span>
<svg class="b" style="left:137.3px;top:937px;" width="8" height="5.5" viewBox="0 0 8 5.5"><path d="M0.5 0.5 L4.0 4.5 L7.5 0.5" fill="none" stroke="#e6e6e6" stroke-width="1.3" stroke-linecap="round" stroke-linejoin="round"/></svg>
<span class="t " style="left:158.2px;top:928.0px;height:20px;line-height:20px;font-size:14.5px;color:#e6e6e6;">Keying</span>
<svg class="b" style="left:212.8px;top:937px;" width="8" height="5.5" viewBox="0 0 8 5.5"><path d="M0.5 0.5 L4.0 4.5 L7.5 0.5" fill="none" stroke="#e6e6e6" stroke-width="1.3" stroke-linecap="round" stroke-linejoin="round"/></svg>
<span class="t " style="left:236.4px;top:928.0px;height:20px;line-height:20px;font-size:14.5px;color:#e6e6e6;">View</span>
<span class="t " style="left:286.3px;top:928.0px;height:20px;line-height:20px;font-size:14.5px;color:#e6e6e6;">Marker</span>
<div class="b" style="left:677px;top:926px;width:50px;height:25px;background:#2b2b2b;border:1px solid #383838;border-radius:5px;"></div>
<div class="b" style="left:677.8px;top:926.9px;width:23.4px;height:23.4px;background:#545454;border-radius:5px 0 0 5px;"></div>
<svg class="b" style="left:682px;top:931.4px;" width="15" height="15" viewBox="0 0 15 15"><circle cx="7.3" cy="7.3" r="5.9" fill="none" stroke="#c8c8c8" stroke-width="1.4"/></svg>
<svg class="b" style="left:709.5px;top:937px;" width="8" height="5.5" viewBox="0 0 8 5.5"><path d="M0.5 0.5 L4.0 4.5 L7.5 0.5" fill="none" stroke="#5a5a5a" stroke-width="1.3" stroke-linecap="round" stroke-linejoin="round"/></svg>
<div class="b" style="left:733.9px;top:926.9px;width:148.1px;height:23.4px;background:#545454;border-radius:5px;"></div>
<div class="b" style="left:756.8px;top:926.9px;width:1px;height:23.4px;background:#404040;"></div>
<div class="b" style="left:781.8px;top:926.9px;width:1px;height:23.4px;background:#404040;"></div>
<div class="b" style="left:806.8px;top:926.9px;width:1px;height:23.4px;background:#404040;"></div>
<div class="b" style="left:831.6px;top:926.9px;width:1px;height:23.4px;background:#404040;"></div>
<div class="b" style="left:856.8px;top:926.9px;width:1px;height:23.4px;background:#404040;"></div>
<svg class="b" style="left:730px;top:926px;" width="160" height="26" viewBox="0 0 160 26"><rect x="8.75" y="6" width="3.2" height="12.6" fill="#ececec"/><path d="M21.1 6.3 L21.1 18.3 L13.3 12.3 Z" fill="#ececec"/><path d="M36.0 6.1 L41.7 12.6 L36.0 19.1 L30.3 12.6 Z" fill="#ececec"/><path d="M50.0 7.5 L50.0 17.8 L43.7 12.6 Z" fill="#ececec"/><path d="M72.3 4.9 L72.3 20.1 L59.2 12.5 Z" fill="#ececec" stroke="#ececec" stroke-width="0.8" stroke-linejoin="round"/><path d="M84.1 4.9 L84.1 20.1 L97.0 12.5 Z" fill="#ececec" stroke="#ececec" stroke-width="0.8" stroke-linejoin="round"/><path d="M105.0 7.5 L105.0 17.8 L111.3 12.6 Z" fill="#ececec"/><path d="M119.0 6.1 L124.7 12.6 L119.0 19.1 L113.3 12.6 Z" fill="#ececec"/><path d="M133.6 6.3 L133.6 18.3 L141.9 12.3 Z" fill="#ececec"/><rect x="142.79999999999995" y="6" width="3.2" height="12.6" fill="#ececec"/></svg>
<div class="b" style="left:1234.6px;top:926.8px;width:91.7px;height:23.4px;background:#545454;border-radius:5px;"></div>
<span class="t" style="left:1179.6px;width:200px;text-align:center;top:928.0px;height:20px;line-height:20px;font-size:14.5px;color:#e6e6e6;">1</span>
<div class="b" style="left:1333.7px;top:926.8px;width:241.9px;height:23.4px;background:#545454;border-radius:5px;"></div>
<div class="b" style="left:1356.9px;top:926.8px;width:1px;height:23.4px;background:#3a3a3a;"></div>
<div class="b" style="left:1469.2px;top:926.8px;width:1px;height:23.4px;background:#3a3a3a;"></div>
<svg class="b" style="left:1337px;top:929px;" width="18" height="19" viewBox="0 0 18 19"><circle cx="8.6" cy="10.6" r="6.6" fill="none" stroke="#e6e6e6" stroke-width="1.4"/><path d="M8.6 6.6 V11 H12 M6 1.6 H11.2 M8.6 1.6 V4 M14 4.6 L16 3" fill="none" stroke="#e6e6e6" stroke-width="1.4"/></svg>
<span class="t " style="left:1377.7px;top:928.0px;height:20px;line-height:20px;font-size:14.5px;color:#e6e6e6;">Start</span>
<span class="t" style="right:468px;top:928.0px;height:20px;line-height:20px;font-size:14.5px;color:#e6e6e6;">1</span>
<span class="t " style="left:1489.4px;top:928.0px;height:20px;line-height:20px;font-size:14.5px;color:#e6e6e6;letter-spacing:-0.5px;">End</span>
<span class="t" style="right:361.20000000000005px;top:928.0px;height:20px;line-height:20px;font-size:14.5px;color:#e6e6e6;letter-spacing:0.6px;">250</span>
<span class="t" style="left:86.6px;width:50px;text-align:center;top:957.6px;height:20px;line-height:20px;font-size:14.5px;color:#c4c4c4;letter-spacing:0.8px;">10</span>
<span class="t" style="left:145.6px;width:50px;text-align:center;top:957.6px;height:20px;line-height:20px;font-size:14.5px;color:#c4c4c4;letter-spacing:0.8px;">20</span>
<span class="t" style="left:204.6px;width:50px;text-align:center;top:957.6px;height:20px;line-height:20px;font-size:14.5px;color:#c4c4c4;letter-spacing:0.8px;">30</span>
<span class="t" style="left:263.6px;width:50px;text-align:center;top:957.6px;height:20px;line-height:20px;font-size:14.5px;color:#c4c4c4;letter-spacing:0.8px;">40</span>
<span class="t" style="left:322.6px;width:50px;text-align:center;top:957.6px;height:20px;line-height:20px;font-size:14.5px;color:#c4c4c4;letter-spacing:0.8px;">50</span>
<span class="t" style="left:381.6px;width:50px;text-align:center;top:957.6px;height:20px;line-height:20px;font-size:14.5px;color:#c4c4c4;letter-spacing:0.8px;">60</span>
<span class="t" style="left:440.6px;width:50px;text-align:center;top:957.6px;height:20px;line-height:20px;font-size:14.5px;color:#c4c4c4;letter-spacing:0.8px;">70</span>
<span class="t" style="left:499.6px;width:50px;text-align:center;top:957.6px;height:20px;line-height:20px;font-size:14.5px;color:#c4c4c4;letter-spacing:0.8px;">80</span>
<span class="t" style="left:558.6px;width:50px;text-align:center;top:957.6px;height:20px;line-height:20px;font-size:14.5px;color:#c4c4c4;letter-spacing:0.8px;">90</span>
<span class="t" style="left:617.6px;width:50px;text-align:center;top:957.6px;height:20px;line-height:20px;font-size:14.5px;color:#c4c4c4;letter-spacing:0.8px;">100</span>
<span class="t" style="left:676.6px;width:50px;text-align:center;top:957.6px;height:20px;line-height:20px;font-size:14.5px;color:#c4c4c4;letter-spacing:0.8px;">110</span>
<span class="t" style="left:735.6px;width:50px;text-align:center;top:957.6px;height:20px;line-height:20px;font-size:14.5px;color:#c4c4c4;letter-spacing:0.8px;">120</span>
<span class="t" style="left:794.6px;width:50px;text-align:center;top:957.6px;height:20px;line-height:20px;font-size:14.5px;color:#c4c4c4;letter-spacing:0.8px;">130</span>
<span class="t" style="left:853.6px;width:50px;text-align:center;top:957.6px;height:20px;line-height:20px;font-size:14.5px;color:#c4c4c4;letter-spacing:0.8px;">140</span>
<span class="t" style="left:912.6px;width:50px;text-align:center;top:957.6px;height:20px;line-height:20px;font-size:14.5px;color:#c4c4c4;letter-spacing:0.8px;">150</span>
<span class="t" style="left:971.6px;width:50px;text-align:center;top:957.6px;height:20px;line-height:20px;font-size:14.5px;color:#c4c4c4;letter-spacing:0.8px;">160</span>
<span class="t" style="left:1030.6px;width:50px;text-align:center;top:957.6px;height:20px;line-height:20px;font-size:14.5px;color:#c4c4c4;letter-spacing:0.8px;">170</span>
<span class="t" style="left:1089.6px;width:50px;text-align:center;top:957.6px;height:20px;line-height:20px;font-size:14.5px;color:#c4c4c4;letter-spacing:0.8px;">180</span>
<span class="t" style="left:1148.6px;width:50px;text-align:center;top:957.6px;height:20px;line-height:20px;font-size:14.5px;color:#c4c4c4;letter-spacing:0.8px;">190</span>
<span class="t" style="left:1207.6px;width:50px;text-align:center;top:957.6px;height:20px;line-height:20px;font-size:14.5px;color:#c4c4c4;letter-spacing:0.8px;">200</span>
<span class="t" style="left:1266.6px;width:50px;text-align:center;top:957.6px;height:20px;line-height:20px;font-size:14.5px;color:#c4c4c4;letter-spacing:0.8px;">210</span>
<span class="t" style="left:1325.6px;width:50px;text-align:center;top:957.6px;height:20px;line-height:20px;font-size:14.5px;color:#c4c4c4;letter-spacing:0.8px;">220</span>
<span class="t" style="left:1384.6px;width:50px;text-align:center;top:957.6px;height:20px;line-height:20px;font-size:14.5px;color:#c4c4c4;letter-spacing:0.8px;">230</span>
<span class="t" style="left:1443.6px;width:50px;text-align:center;top:957.6px;height:20px;line-height:20px;font-size:14.5px;color:#c4c4c4;letter-spacing:0.8px;">240</span>
<span class="t" style="left:1502.6px;width:50px;text-align:center;top:957.6px;height:20px;line-height:20px;font-size:14.5px;color:#c4c4c4;letter-spacing:0.8px;">250</span>
<div class="b" style="left:43.7px;top:957px;width:29.8px;height:21px;background:#4772b3;border-radius:5px;"></div>
<span class="t" style="left:43.6px;width:30px;text-align:center;top:957.6px;height:20px;line-height:20px;font-size:14.5px;color:#ffffff;">1</span>
<div class="b" style="left:11px;top:978.2px;width:1564.4px;height:10.6px;background:#525252;border-radius:5.3px;"></div>
<div class="b" style="left:12.4px;top:979.3px;width:8.4px;height:8.4px;background:#2c2c2c;border-radius:50%;"></div>
<div class="b" style="left:1564.2px;top:979.3px;width:8.4px;height:8.4px;background:#2c2c2c;border-radius:50%;"></div>
<svg class="b" style="left:0px;top:988.8px;" width="1585" height="3" viewBox="0 0 1585 3"><rect x="52.5" y="0" width="1" height="2" fill="#444"/><rect x="82.0" y="0" width="1" height="1.4" fill="#444"/><rect x="111.5" y="0" width="1" height="2" fill="#444"/><rect x="141.0" y="0" width="1" height="1.4" fill="#444"/><rect x="170.5" y="0" width="1" height="2" fill="#444"/><rect x="200.0" y="0" width="1" height="1.4" fill="#444"/><rect x="229.5" y="0" width="1" height="2" fill="#444"/><rect x="259.0" y="0" width="1" height="1.4" fill="#444"/><rect x="288.5" y="0" width="1" height="2" fill="#444"/><rect x="318.0" y="0" width="1" height="1.4" fill="#444"/><rect x="347.5" y="0" width="1" height="2" fill="#444"/><rect x="377.0" y="0" width="1" height="1.4" fill="#444"/><rect x="406.5" y="0" width="1" height="2" fill="#444"/><rect x="436.0" y="0" width="1" height="1.4" fill="#444"/><rect x="465.5" y="0" width="1" height="2" fill="#444"/><rect x="495.0" y="0" width="1" height="1.4" fill="#444"/><rect x="524.5" y="0" width="1" height="2" fill="#444"/><rect x="554.0" y="0" width="1" height="1.4" fill="#444"/><rect x="583.5" y="0" width="1" height="2" fill="#444"/><rect x="613.0" y="0" width="1" height="1.4" fill="#444"/><rect x="642.5" y="0" width="1" height="2" fill="#444"/><rect x="672.0" y="0" width="1" height="1.4" fill="#444"/><rect x="701.5" y="0" width="1" height="2" fill="#444"/><rect x="731.0" y="0" width="1" height="1.4" fill="#444"/><rect x="760.5" y="0" width="1" height="2" fill="#444"/><rect x="790.0" y="0" width="1" height="1.4" fill="#444"/><rect x="819.5" y="0" width="1" height="2" fill="#444"/><rect x="849.0" y="0" width="1" height="1.4" fill="#444"/><rect x="878.5" y="0" width="1" height="2" fill="#444"/><rect x="908.0" y="0" width="1" height="1.4" fill="#444"/><rect x="937.5" y="0" width="1" height="2" fill="#444"/><rect x="967.0" y="0" width="1" height="1.4" fill="#444"/><rect x="996.5" y="0" width="1" height="2" fill="#444"/><rect x="1026.0" y="0" width="1" height="1.4" fill="#444"/><rect x="1055.5" y="0" width="1" height="2" fill="#444"/><rect x="1085.0" y="0" width="1" height="1.4" fill="#444"/><rect x="1114.5" y="0" width="1" height="2" fill="#444"/><rect x="1144.0" y="0" width="1" height="1.4" fill="#444"/><rect x="1173.5" y="0" width="1" height="2" fill="#444"/><rect x="1203.0" y="0" width="1" height="1.4" fill="#444"/><rect x="1232.5" y="0" width="1" height="2" fill="#444"/><rect x="1262.0" y="0" width="1" height="1.4" fill="#444"/><rect x="1291.5" y="0" width="1" height="2" fill="#444"/><rect x="1321.0" y="0" width="1" height="1.4" fill="#444"/><rect x="1350.5" y="0" width="1" height="2" fill="#444"/><rect x="1380.0" y="0" width="1" height="1.4" fill="#444"/><rect x="1409.5" y="0" width="1" height="2" fill="#444"/><rect x="1439.0" y="0" width="1" height="1.4" fill="#444"/><rect x="1468.5" y="0" width="1" height="2" fill="#444"/><rect x="1498.0" y="0" width="1" height="1.4" fill="#444"/><rect x="1527.5" y="0" width="1" height="2" fill="#444"/><rect x="1557.0" y="0" width="1" height="1.4" fill="#444"/></svg>
<div class="b" style="left:57.8px;top:988.6px;width:1.8px;height:2.4px;background:#4772b3;"></div>
<svg class="b" style="left:1px;top:974px;" width="8" height="13" viewBox="0 0 8 13"><path d="M1 1.4 L6 6.5 L1 11.6" fill="none" stroke="#9a9a9a" stroke-width="1.2"/></svg>
<svg class="b" style="left:1577.5px;top:975px;" width="8" height="13" viewBox="0 0 8 13"><path d="M6.4 1.4 L1.4 6.5 L6.4 11.6" fill="none" stroke="#8a8a8a" stroke-width="1.2"/></svg>
<div class="b" style="left:1577px;top:962px;width:6px;height:10px;background:#3a3a3a;border-radius:2px;"></div>
<svg class="b" style="left:11.9px;top:995.6px;" width="16" height="22" viewBox="0 0 16 22"><path d="M0.8 10.6 V5.6 Q0.8 0.8 5.6 0.8 H7.2 V10.6 Z" fill="#8c8c8c"/><path d="M7.2 0.8 H10 Q14.8 0.8 14.8 5.6 V15.8 Q14.8 20.6 10 20.6 H5.6 Q0.8 20.6 0.8 15.8 V12" fill="none" stroke="#8c8c8c" stroke-width="1.5"/></svg>
<span class="t " style="left:33.6px;top:996.0px;height:20px;line-height:20px;font-size:14.4px;color:#a2a2a2;">Confirm</span>
<svg class="b" style="left:96.2px;top:995.6px;" width="16" height="22" viewBox="0 0 16 22"><path d="M0.8 10.6 V5.6 Q0.8 0.8 5.6 0.8 H7.2 V10.6 Z" fill="#8c8c8c"/><path d="M7.2 0.8 H10 Q14.8 0.8 14.8 5.6 V15.8 Q14.8 20.6 10 20.6 H5.6 Q0.8 20.6 0.8 15.8 V12" fill="none" stroke="#8c8c8c" stroke-width="1.5"/></svg>
<span class="t " style="left:117.4px;top:996.0px;height:20px;line-height:20px;font-size:14.4px;color:#a2a2a2;">Cancel</span>
<svg class="b" style="left:175px;top:996px;" width="21" height="21" viewBox="0 0 21 21"><path d="M10.5 1.2 L19.6 10.6 H15 V19.6 H6 V10.6 H1.4 Z" fill="none" stroke="#8c8c8c" stroke-width="1.5" stroke-linejoin="round"/></svg>
<div class="b" style="left:200.6px;top:996.2px;width:20.0px;height:20.2px;background:transparent;border:1.4px solid #8c8c8c;border-radius:4.5px;"></div>
<svg class="b" style="left:203.2px;top:998.9px;" width="15" height="15" viewBox="0 0 15 15"><path d="M1.6 1 V6.6 M4 3.8 H13.4 M7 1.2 L4 3.8 L7 6.4 M13.4 8.4 V14 M11 11.2 H1.6 M8 8.6 L11 11.2 L8 13.8" fill="none" stroke="#b4b4b4" stroke-width="1.3"/></svg>
<span class="t " style="left:224.6px;top:996.0px;height:20px;line-height:20px;font-size:14.4px;color:#a2a2a2;">Snap</span>
<div class="b" style="left:269.2px;top:996.2px;width:30.100000000000023px;height:20.2px;background:transparent;border:1.4px solid #8c8c8c;border-radius:4.5px;"></div>
<span class="t" style="left:254.25px;width:60px;text-align:center;top:996.6px;height:20px;line-height:20px;font-size:14px;color:#b4b4b4;">Ctrl</span>
<span class="t " style="left:303.3px;top:996.0px;height:20px;line-height:20px;font-size:14.4px;color:#a2a2a2;">Snap Invert</span>
<div class="b" style="left:392.7px;top:996.2px;width:19.69999999999999px;height:20.2px;background:transparent;border:1.4px solid #8c8c8c;border-radius:4.5px;"></div>
<span class="t" style="left:372.54999999999995px;width:60px;text-align:center;top:996.6px;height:20px;line-height:20px;font-size:14px;color:#b4b4b4;">B</span>
<span class="t " style="left:416.6px;top:996.0px;height:20px;line-height:20px;font-size:14.4px;color:#a2a2a2;">Set Snap Base</span>
<div class="b" style="left:524px;top:996.2px;width:20px;height:20.2px;background:transparent;border:1.4px solid #8c8c8c;border-radius:4.5px;"></div>
<span class="t" style="left:504.0px;width:60px;text-align:center;top:996.6px;height:20px;line-height:20px;font-size:14px;color:#b4b4b4;">G</span>
<span class="t " style="left:548.3px;top:996.0px;height:20px;line-height:20px;font-size:14.4px;color:#a2a2a2;">Move</span>
<div class="b" style="left:595.7px;top:996.2px;width:20.0px;height:20.2px;background:transparent;border:1.4px solid #8c8c8c;border-radius:4.5px;"></div>
<span class="t" style="left:575.7px;width:60px;text-align:center;top:996.6px;height:20px;line-height:20px;font-size:14px;color:#b4b4b4;">R</span>
<span class="t " style="left:620px;top:996.0px;height:20px;line-height:20px;font-size:14.4px;color:#a2a2a2;">Rotate</span>
<div class="b" style="left:674.3px;top:996.2px;width:20.0px;height:20.2px;background:transparent;border:1.4px solid #8c8c8c;border-radius:4.5px;"></div>
<span class="t" style="left:654.3px;width:60px;text-align:center;top:996.6px;height:20px;line-height:20px;font-size:14px;color:#b4b4b4;">S</span>
<span class="t " style="left:698.3px;top:996.0px;height:20px;line-height:20px;font-size:14.4px;color:#a2a2a2;">Resize</span>
<svg class="b" style="left:753px;top:996px;" width="21" height="21" viewBox="0 0 21 21"><path d="M10.5 1.2 L19.6 10.6 H15 V19.6 H6 V10.6 H1.4 Z" fill="none" stroke="#8c8c8c" stroke-width="1.5" stroke-linejoin="round"/></svg>
<span class="t " style="left:777.3px;top:996.0px;height:20px;line-height:20px;font-size:14.4px;color:#a2a2a2;">Precision Mode</span>
<div class="b" style="left:888.3px;top:996.2px;width:20.0px;height:20.2px;background:#555555;border:1.4px solid #555555;border-radius:4.5px;"></div>
<span class="t" style="left:868.3px;width:60px;text-align:center;top:996.6px;height:20px;line-height:20px;font-size:14px;color:#c8c8c8;">C</span>
<div class="b" style="left:913.3px;top:996.2px;width:30.0px;height:20.2px;background:#555555;border:1.4px solid #555555;border-radius:4.5px;"></div>
<span class="t" style="left:898.3px;width:60px;text-align:center;top:996.6px;height:20px;line-height:20px;font-size:14px;color:#c8c8c8;">Alt</span>
<span class="t " style="left:947.3px;top:996.0px;height:20px;line-height:20px;font-size:14.4px;color:#a2a2a2;">Clamp</span>
<div class="b" style="left:1001px;top:996.2px;width:20px;height:20.2px;background:transparent;border:1.4px solid #8c8c8c;border-radius:4.5px;"></div>
<span class="t" style="left:981.0px;width:60px;text-align:center;top:996.6px;height:20px;line-height:20px;font-size:14px;color:#b4b4b4;">E</span>
<span class="t " style="left:1025px;top:996.0px;height:20px;line-height:20px;font-size:14.4px;color:#a2a2a2;">Even</span>
<svg class="b" style="left:1830px;top:995px;" width="26" height="24" viewBox="0 0 26 24"><circle cx="12" cy="11.9" r="8" fill="none" stroke="#707070" stroke-width="1.3"/><path d="M12 3.9 Q7.2 11.9 12 19.9 M12 3.9 Q16.8 11.9 12 19.9 M4.4 9.4 H19.6 M4.4 14.4 H19.6" fill="none" stroke="#707070" stroke-width="1.1"/><path d="M4.6 4.6 L19.2 19.2" stroke="#181818" stroke-width="1.6"/><path d="M3.4 3.4 L20.3 20.3" stroke="#707070" stroke-width="1.5"/></svg>
<div class="b" style="left:1861.5px;top:996.2px;width:1.6px;height:17.6px;background:#6c6c6c;"></div>
<span class="t " style="left:1869.7px;top:995.8px;height:20px;line-height:20px;font-size:14.8px;color:#8e8e8e;">4.3.2</span>
</div></body></html>
